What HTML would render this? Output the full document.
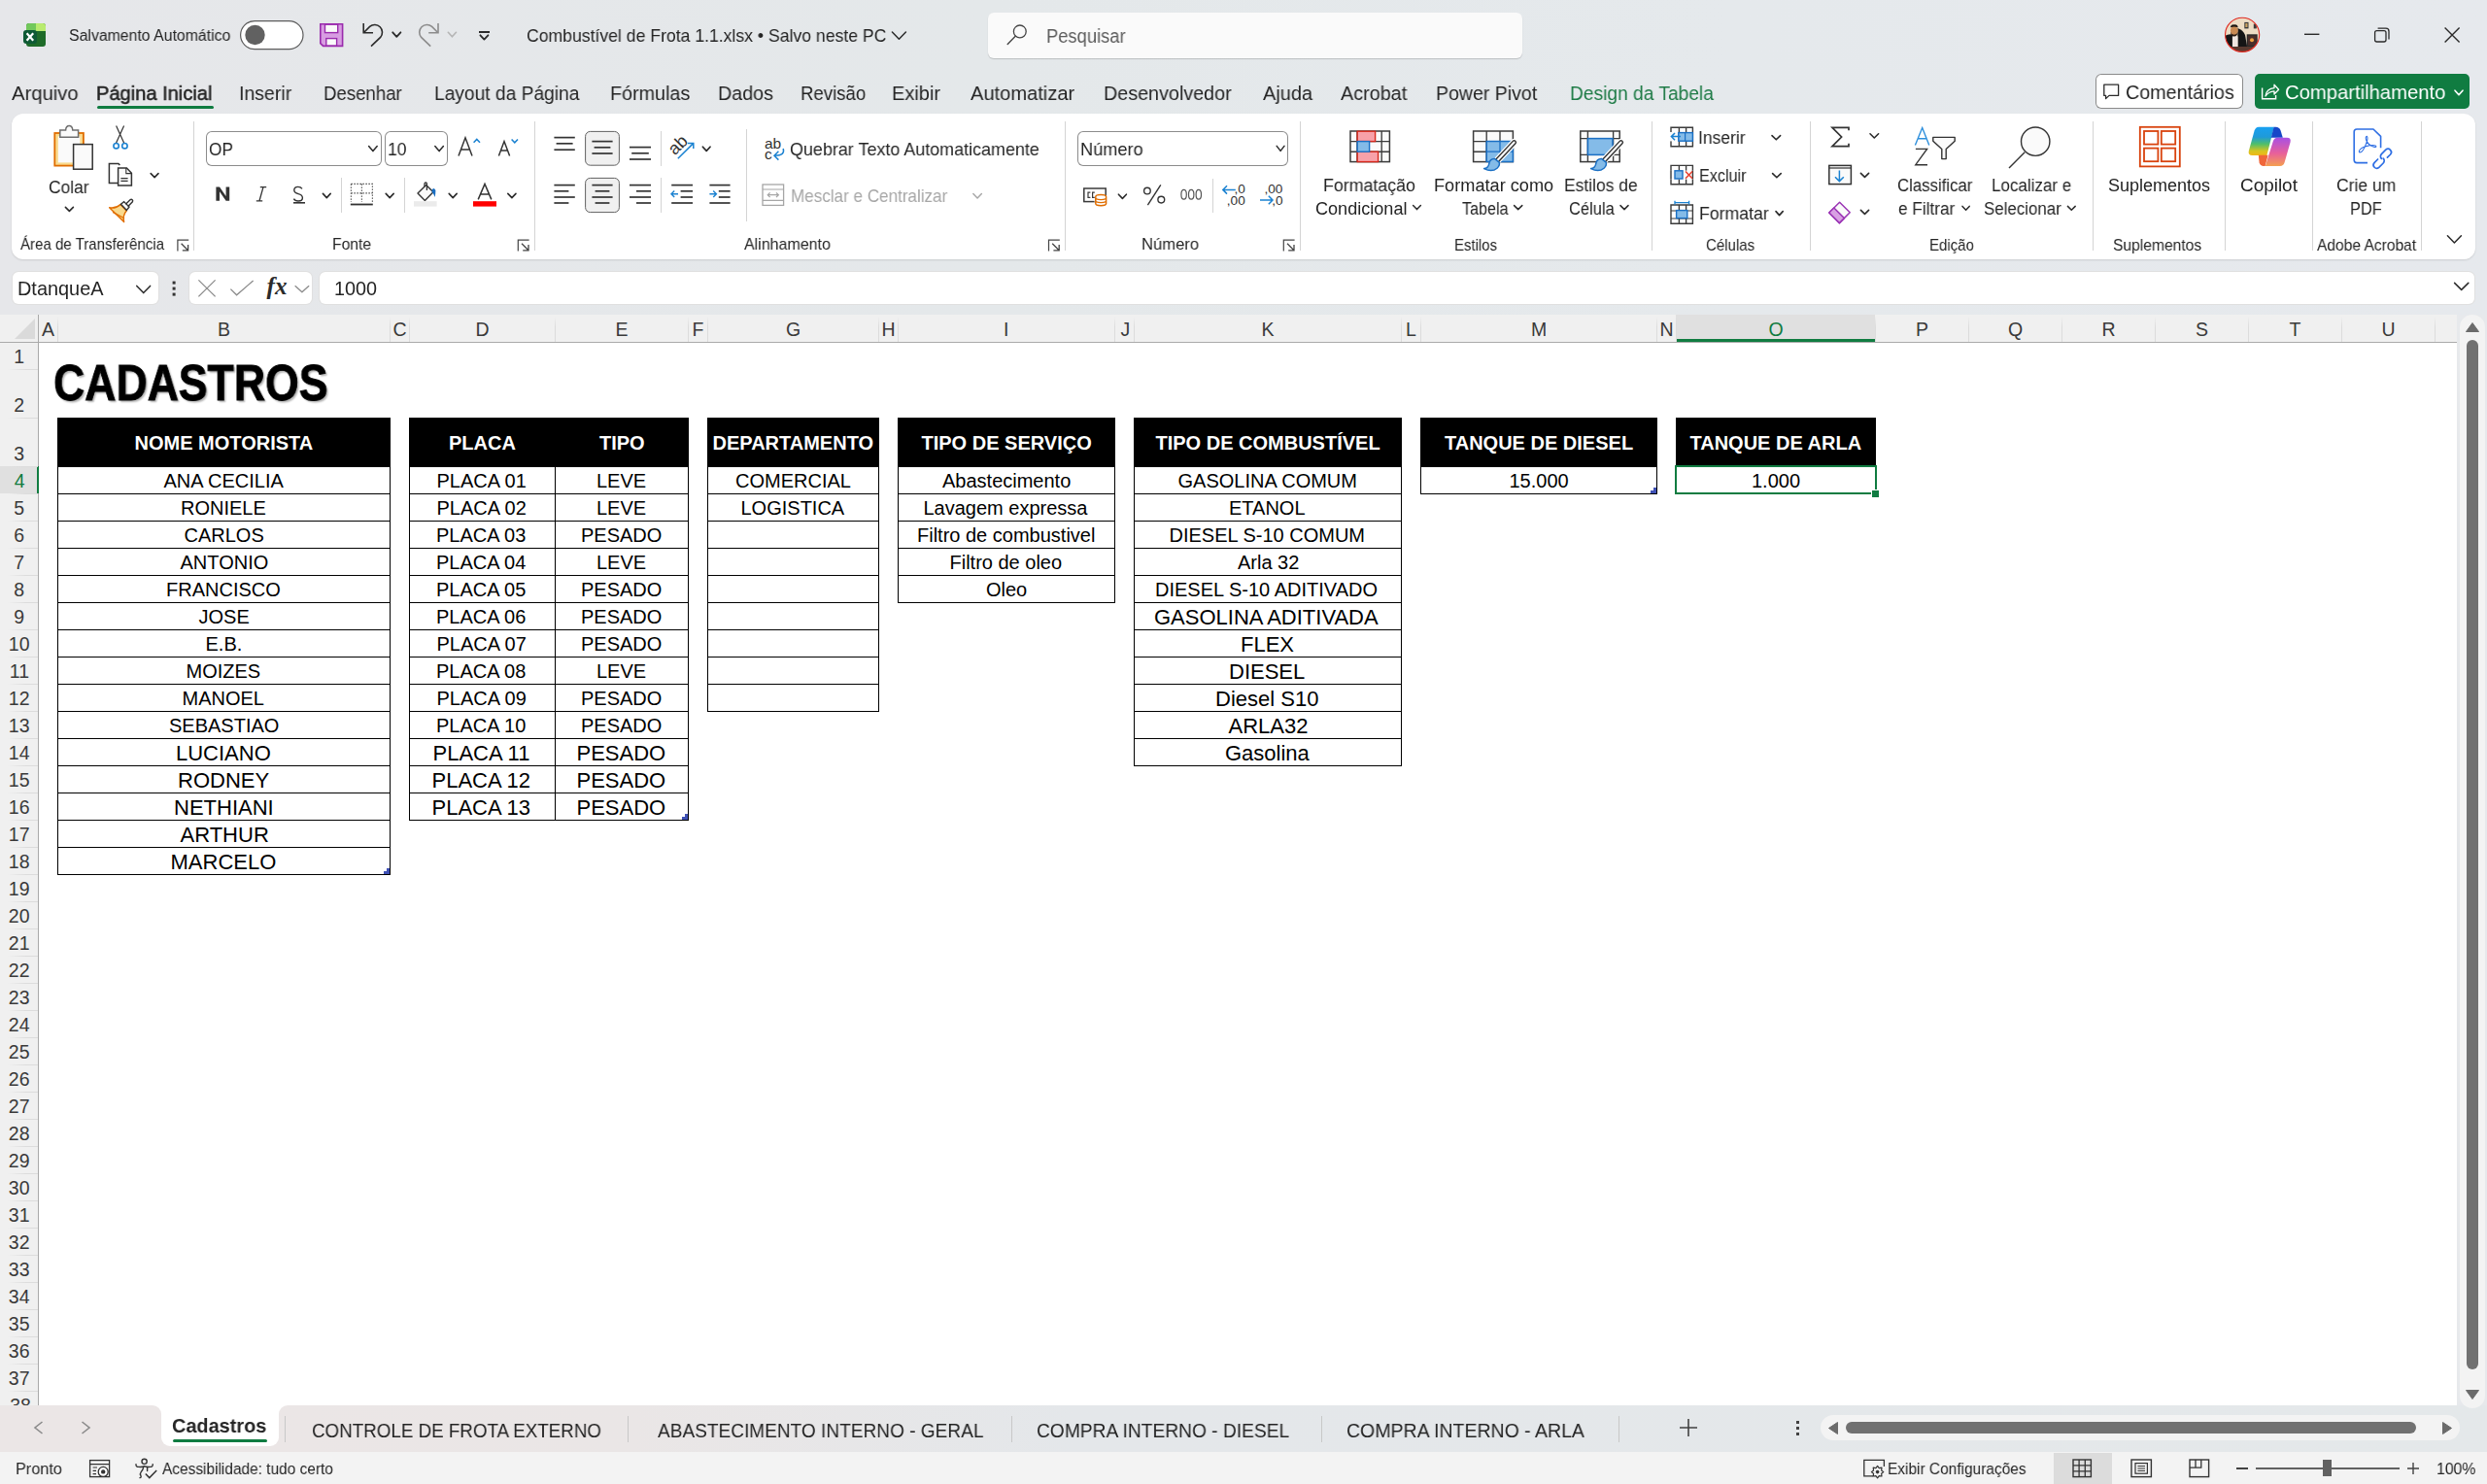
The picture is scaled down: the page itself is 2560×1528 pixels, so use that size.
<!DOCTYPE html>
<html><head><meta charset="utf-8"><style>
html,body{margin:0;padding:0;width:2560px;height:1528px;overflow:hidden;}
body{position:relative;background:#e7e9ec;font-family:'Liberation Sans', sans-serif;}
.t{position:absolute;white-space:nowrap;line-height:0;height:0;}
.g{will-change:transform;}
svg{overflow:visible}
</style></head><body>
<div style="position:absolute;left:0;top:0;width:2560px;height:324px;background:linear-gradient(90deg,#e6e7ea 0%,#e4e8ea 40%,#e5e9ec 70%,#e6e9ed 100%)"></div><div style="position:absolute;left:12px;top:117px;width:2536px;height:150px;background:#fff;border-radius:12px;box-shadow:0 1px 2px rgba(0,0,0,0.12);"></div><div style="position:absolute;left:13px;top:280px;width:150px;height:33px;background:#fff;border-radius:6px;box-shadow:0 0 0 1px #e0e0e0;"></div><div style="position:absolute;left:195px;top:280px;width:126px;height:33px;background:#fff;border-radius:6px;box-shadow:0 0 0 1px #e0e0e0;"></div><div style="position:absolute;left:329px;top:280px;width:2218px;height:33px;background:#fff;border-radius:6px;box-shadow:0 0 0 1px #e0e0e0;"></div><div style="position:absolute;left:0px;top:324px;width:2529px;height:28px;background:#f0f0f0;"></div><div style="position:absolute;left:0px;top:352px;width:39px;height:1095px;background:#f0f0f0;"></div><div style="position:absolute;left:39px;top:352px;width:2490px;height:1095px;background:#fff;"></div><div style="position:absolute;left:0px;top:352px;width:2529px;height:1px;background:#ababab;"></div><div style="position:absolute;left:39px;top:324px;width:1px;height:1123px;background:#a9a9a9;"></div><svg style="position:absolute;left:15px;top:328px;" width="22" height="21" viewBox="0 0 22 21"><path d="M21 0 L21 21 L0 21 Z" fill="#dadada"/></svg><div style="position:absolute;left:1725px;top:324px;width:205px;height:28px;background:#e0e0e0;"></div><div style="position:absolute;left:1725px;top:349px;width:206px;height:3px;background:#107c41;"></div><div style="position:absolute;left:59px;top:326px;width:1px;height:26px;background:linear-gradient(180deg,rgba(222,222,222,0),#dcdcdc 40%);"></div><div style="position:absolute;left:401px;top:326px;width:1px;height:26px;background:linear-gradient(180deg,rgba(222,222,222,0),#dcdcdc 40%);"></div><div style="position:absolute;left:421px;top:326px;width:1px;height:26px;background:linear-gradient(180deg,rgba(222,222,222,0),#dcdcdc 40%);"></div><div style="position:absolute;left:571px;top:326px;width:1px;height:26px;background:linear-gradient(180deg,rgba(222,222,222,0),#dcdcdc 40%);"></div><div style="position:absolute;left:708px;top:326px;width:1px;height:26px;background:linear-gradient(180deg,rgba(222,222,222,0),#dcdcdc 40%);"></div><div style="position:absolute;left:728px;top:326px;width:1px;height:26px;background:linear-gradient(180deg,rgba(222,222,222,0),#dcdcdc 40%);"></div><div style="position:absolute;left:904px;top:326px;width:1px;height:26px;background:linear-gradient(180deg,rgba(222,222,222,0),#dcdcdc 40%);"></div><div style="position:absolute;left:924px;top:326px;width:1px;height:26px;background:linear-gradient(180deg,rgba(222,222,222,0),#dcdcdc 40%);"></div><div style="position:absolute;left:1147px;top:326px;width:1px;height:26px;background:linear-gradient(180deg,rgba(222,222,222,0),#dcdcdc 40%);"></div><div style="position:absolute;left:1167px;top:326px;width:1px;height:26px;background:linear-gradient(180deg,rgba(222,222,222,0),#dcdcdc 40%);"></div><div style="position:absolute;left:1442px;top:326px;width:1px;height:26px;background:linear-gradient(180deg,rgba(222,222,222,0),#dcdcdc 40%);"></div><div style="position:absolute;left:1462px;top:326px;width:1px;height:26px;background:linear-gradient(180deg,rgba(222,222,222,0),#dcdcdc 40%);"></div><div style="position:absolute;left:1705px;top:326px;width:1px;height:26px;background:linear-gradient(180deg,rgba(222,222,222,0),#dcdcdc 40%);"></div><div style="position:absolute;left:1725px;top:326px;width:1px;height:26px;background:linear-gradient(180deg,rgba(222,222,222,0),#dcdcdc 40%);"></div><div style="position:absolute;left:1930px;top:326px;width:1px;height:26px;background:linear-gradient(180deg,rgba(222,222,222,0),#dcdcdc 40%);"></div><div style="position:absolute;left:2026px;top:326px;width:1px;height:26px;background:linear-gradient(180deg,rgba(222,222,222,0),#dcdcdc 40%);"></div><div style="position:absolute;left:2122px;top:326px;width:1px;height:26px;background:linear-gradient(180deg,rgba(222,222,222,0),#dcdcdc 40%);"></div><div style="position:absolute;left:2218px;top:326px;width:1px;height:26px;background:linear-gradient(180deg,rgba(222,222,222,0),#dcdcdc 40%);"></div><div style="position:absolute;left:2314px;top:326px;width:1px;height:26px;background:linear-gradient(180deg,rgba(222,222,222,0),#dcdcdc 40%);"></div><div style="position:absolute;left:2410px;top:326px;width:1px;height:26px;background:linear-gradient(180deg,rgba(222,222,222,0),#dcdcdc 40%);"></div><div style="position:absolute;left:2506px;top:326px;width:1px;height:26px;background:linear-gradient(180deg,rgba(222,222,222,0),#dcdcdc 40%);"></div><div style="position:absolute;left:0px;top:480px;width:39px;height:28px;background:#e0e0e0;"></div><div style="position:absolute;left:37.5px;top:480px;width:2.5px;height:28px;background:#107c41;"></div><div style="position:absolute;left:8px;top:380px;width:31px;height:1px;background:linear-gradient(90deg,rgba(220,220,220,0),#dcdcdc 60%);"></div><div style="position:absolute;left:8px;top:430px;width:31px;height:1px;background:linear-gradient(90deg,rgba(220,220,220,0),#dcdcdc 60%);"></div><div style="position:absolute;left:8px;top:480px;width:31px;height:1px;background:linear-gradient(90deg,rgba(220,220,220,0),#dcdcdc 60%);"></div><div style="position:absolute;left:8px;top:508px;width:31px;height:1px;background:linear-gradient(90deg,rgba(220,220,220,0),#dcdcdc 60%);"></div><div style="position:absolute;left:8px;top:536px;width:31px;height:1px;background:linear-gradient(90deg,rgba(220,220,220,0),#dcdcdc 60%);"></div><div style="position:absolute;left:8px;top:564px;width:31px;height:1px;background:linear-gradient(90deg,rgba(220,220,220,0),#dcdcdc 60%);"></div><div style="position:absolute;left:8px;top:592px;width:31px;height:1px;background:linear-gradient(90deg,rgba(220,220,220,0),#dcdcdc 60%);"></div><div style="position:absolute;left:8px;top:620px;width:31px;height:1px;background:linear-gradient(90deg,rgba(220,220,220,0),#dcdcdc 60%);"></div><div style="position:absolute;left:8px;top:648px;width:31px;height:1px;background:linear-gradient(90deg,rgba(220,220,220,0),#dcdcdc 60%);"></div><div style="position:absolute;left:8px;top:676px;width:31px;height:1px;background:linear-gradient(90deg,rgba(220,220,220,0),#dcdcdc 60%);"></div><div style="position:absolute;left:8px;top:704px;width:31px;height:1px;background:linear-gradient(90deg,rgba(220,220,220,0),#dcdcdc 60%);"></div><div style="position:absolute;left:8px;top:732px;width:31px;height:1px;background:linear-gradient(90deg,rgba(220,220,220,0),#dcdcdc 60%);"></div><div style="position:absolute;left:8px;top:760px;width:31px;height:1px;background:linear-gradient(90deg,rgba(220,220,220,0),#dcdcdc 60%);"></div><div style="position:absolute;left:8px;top:788px;width:31px;height:1px;background:linear-gradient(90deg,rgba(220,220,220,0),#dcdcdc 60%);"></div><div style="position:absolute;left:8px;top:816px;width:31px;height:1px;background:linear-gradient(90deg,rgba(220,220,220,0),#dcdcdc 60%);"></div><div style="position:absolute;left:8px;top:844px;width:31px;height:1px;background:linear-gradient(90deg,rgba(220,220,220,0),#dcdcdc 60%);"></div><div style="position:absolute;left:8px;top:872px;width:31px;height:1px;background:linear-gradient(90deg,rgba(220,220,220,0),#dcdcdc 60%);"></div><div style="position:absolute;left:8px;top:900px;width:31px;height:1px;background:linear-gradient(90deg,rgba(220,220,220,0),#dcdcdc 60%);"></div><div style="position:absolute;left:8px;top:928px;width:31px;height:1px;background:linear-gradient(90deg,rgba(220,220,220,0),#dcdcdc 60%);"></div><div style="position:absolute;left:8px;top:956px;width:31px;height:1px;background:linear-gradient(90deg,rgba(220,220,220,0),#dcdcdc 60%);"></div><div style="position:absolute;left:8px;top:984px;width:31px;height:1px;background:linear-gradient(90deg,rgba(220,220,220,0),#dcdcdc 60%);"></div><div style="position:absolute;left:8px;top:1012px;width:31px;height:1px;background:linear-gradient(90deg,rgba(220,220,220,0),#dcdcdc 60%);"></div><div style="position:absolute;left:8px;top:1040px;width:31px;height:1px;background:linear-gradient(90deg,rgba(220,220,220,0),#dcdcdc 60%);"></div><div style="position:absolute;left:8px;top:1068px;width:31px;height:1px;background:linear-gradient(90deg,rgba(220,220,220,0),#dcdcdc 60%);"></div><div style="position:absolute;left:8px;top:1096px;width:31px;height:1px;background:linear-gradient(90deg,rgba(220,220,220,0),#dcdcdc 60%);"></div><div style="position:absolute;left:8px;top:1124px;width:31px;height:1px;background:linear-gradient(90deg,rgba(220,220,220,0),#dcdcdc 60%);"></div><div style="position:absolute;left:8px;top:1152px;width:31px;height:1px;background:linear-gradient(90deg,rgba(220,220,220,0),#dcdcdc 60%);"></div><div style="position:absolute;left:8px;top:1180px;width:31px;height:1px;background:linear-gradient(90deg,rgba(220,220,220,0),#dcdcdc 60%);"></div><div style="position:absolute;left:8px;top:1208px;width:31px;height:1px;background:linear-gradient(90deg,rgba(220,220,220,0),#dcdcdc 60%);"></div><div style="position:absolute;left:8px;top:1236px;width:31px;height:1px;background:linear-gradient(90deg,rgba(220,220,220,0),#dcdcdc 60%);"></div><div style="position:absolute;left:8px;top:1264px;width:31px;height:1px;background:linear-gradient(90deg,rgba(220,220,220,0),#dcdcdc 60%);"></div><div style="position:absolute;left:8px;top:1292px;width:31px;height:1px;background:linear-gradient(90deg,rgba(220,220,220,0),#dcdcdc 60%);"></div><div style="position:absolute;left:8px;top:1320px;width:31px;height:1px;background:linear-gradient(90deg,rgba(220,220,220,0),#dcdcdc 60%);"></div><div style="position:absolute;left:8px;top:1348px;width:31px;height:1px;background:linear-gradient(90deg,rgba(220,220,220,0),#dcdcdc 60%);"></div><div style="position:absolute;left:8px;top:1376px;width:31px;height:1px;background:linear-gradient(90deg,rgba(220,220,220,0),#dcdcdc 60%);"></div><div style="position:absolute;left:8px;top:1404px;width:31px;height:1px;background:linear-gradient(90deg,rgba(220,220,220,0),#dcdcdc 60%);"></div><div style="position:absolute;left:8px;top:1432px;width:31px;height:1px;background:linear-gradient(90deg,rgba(220,220,220,0),#dcdcdc 60%);"></div><div style="position:absolute;left:0;top:1432px;width:39px;height:15px;overflow:hidden"><div class="t" style="left:10.2px;top:14.70px;font-size:19.5px;color:#3a3a3a">38</div></div><div style="position:absolute;left:59px;top:430px;width:343px;height:51px;background:#000;"></div><div style="position:absolute;left:59px;top:480px;width:343px;height:1px;background:#000;"></div><div style="position:absolute;left:59px;top:508px;width:343px;height:1px;background:#000;"></div><div style="position:absolute;left:59px;top:536px;width:343px;height:1px;background:#000;"></div><div style="position:absolute;left:59px;top:564px;width:343px;height:1px;background:#000;"></div><div style="position:absolute;left:59px;top:592px;width:343px;height:1px;background:#000;"></div><div style="position:absolute;left:59px;top:620px;width:343px;height:1px;background:#000;"></div><div style="position:absolute;left:59px;top:648px;width:343px;height:1px;background:#000;"></div><div style="position:absolute;left:59px;top:676px;width:343px;height:1px;background:#000;"></div><div style="position:absolute;left:59px;top:704px;width:343px;height:1px;background:#000;"></div><div style="position:absolute;left:59px;top:732px;width:343px;height:1px;background:#000;"></div><div style="position:absolute;left:59px;top:760px;width:343px;height:1px;background:#000;"></div><div style="position:absolute;left:59px;top:788px;width:343px;height:1px;background:#000;"></div><div style="position:absolute;left:59px;top:816px;width:343px;height:1px;background:#000;"></div><div style="position:absolute;left:59px;top:844px;width:343px;height:1px;background:#000;"></div><div style="position:absolute;left:59px;top:872px;width:343px;height:1px;background:#000;"></div><div style="position:absolute;left:59px;top:900px;width:343px;height:1px;background:#000;"></div><div style="position:absolute;left:59px;top:480px;width:1px;height:421px;background:#000;"></div><div style="position:absolute;left:401px;top:480px;width:1px;height:421px;background:#000;"></div><div style="position:absolute;left:421px;top:430px;width:288px;height:51px;background:#000;"></div><div style="position:absolute;left:421px;top:480px;width:288px;height:1px;background:#000;"></div><div style="position:absolute;left:421px;top:508px;width:288px;height:1px;background:#000;"></div><div style="position:absolute;left:421px;top:536px;width:288px;height:1px;background:#000;"></div><div style="position:absolute;left:421px;top:564px;width:288px;height:1px;background:#000;"></div><div style="position:absolute;left:421px;top:592px;width:288px;height:1px;background:#000;"></div><div style="position:absolute;left:421px;top:620px;width:288px;height:1px;background:#000;"></div><div style="position:absolute;left:421px;top:648px;width:288px;height:1px;background:#000;"></div><div style="position:absolute;left:421px;top:676px;width:288px;height:1px;background:#000;"></div><div style="position:absolute;left:421px;top:704px;width:288px;height:1px;background:#000;"></div><div style="position:absolute;left:421px;top:732px;width:288px;height:1px;background:#000;"></div><div style="position:absolute;left:421px;top:760px;width:288px;height:1px;background:#000;"></div><div style="position:absolute;left:421px;top:788px;width:288px;height:1px;background:#000;"></div><div style="position:absolute;left:421px;top:816px;width:288px;height:1px;background:#000;"></div><div style="position:absolute;left:421px;top:844px;width:288px;height:1px;background:#000;"></div><div style="position:absolute;left:421px;top:480px;width:1px;height:365px;background:#000;"></div><div style="position:absolute;left:571px;top:480px;width:1px;height:365px;background:#000;"></div><div style="position:absolute;left:708px;top:480px;width:1px;height:365px;background:#000;"></div><div style="position:absolute;left:728px;top:430px;width:177px;height:51px;background:#000;"></div><div style="position:absolute;left:728px;top:480px;width:177px;height:1px;background:#000;"></div><div style="position:absolute;left:728px;top:508px;width:177px;height:1px;background:#000;"></div><div style="position:absolute;left:728px;top:536px;width:177px;height:1px;background:#000;"></div><div style="position:absolute;left:728px;top:564px;width:177px;height:1px;background:#000;"></div><div style="position:absolute;left:728px;top:592px;width:177px;height:1px;background:#000;"></div><div style="position:absolute;left:728px;top:620px;width:177px;height:1px;background:#000;"></div><div style="position:absolute;left:728px;top:648px;width:177px;height:1px;background:#000;"></div><div style="position:absolute;left:728px;top:676px;width:177px;height:1px;background:#000;"></div><div style="position:absolute;left:728px;top:704px;width:177px;height:1px;background:#000;"></div><div style="position:absolute;left:728px;top:732px;width:177px;height:1px;background:#000;"></div><div style="position:absolute;left:728px;top:480px;width:1px;height:253px;background:#000;"></div><div style="position:absolute;left:904px;top:480px;width:1px;height:253px;background:#000;"></div><div style="position:absolute;left:924px;top:430px;width:224px;height:51px;background:#000;"></div><div style="position:absolute;left:924px;top:480px;width:224px;height:1px;background:#000;"></div><div style="position:absolute;left:924px;top:508px;width:224px;height:1px;background:#000;"></div><div style="position:absolute;left:924px;top:536px;width:224px;height:1px;background:#000;"></div><div style="position:absolute;left:924px;top:564px;width:224px;height:1px;background:#000;"></div><div style="position:absolute;left:924px;top:592px;width:224px;height:1px;background:#000;"></div><div style="position:absolute;left:924px;top:620px;width:224px;height:1px;background:#000;"></div><div style="position:absolute;left:924px;top:480px;width:1px;height:141px;background:#000;"></div><div style="position:absolute;left:1147px;top:480px;width:1px;height:141px;background:#000;"></div><div style="position:absolute;left:1167px;top:430px;width:276px;height:51px;background:#000;"></div><div style="position:absolute;left:1167px;top:480px;width:276px;height:1px;background:#000;"></div><div style="position:absolute;left:1167px;top:508px;width:276px;height:1px;background:#000;"></div><div style="position:absolute;left:1167px;top:536px;width:276px;height:1px;background:#000;"></div><div style="position:absolute;left:1167px;top:564px;width:276px;height:1px;background:#000;"></div><div style="position:absolute;left:1167px;top:592px;width:276px;height:1px;background:#000;"></div><div style="position:absolute;left:1167px;top:620px;width:276px;height:1px;background:#000;"></div><div style="position:absolute;left:1167px;top:648px;width:276px;height:1px;background:#000;"></div><div style="position:absolute;left:1167px;top:676px;width:276px;height:1px;background:#000;"></div><div style="position:absolute;left:1167px;top:704px;width:276px;height:1px;background:#000;"></div><div style="position:absolute;left:1167px;top:732px;width:276px;height:1px;background:#000;"></div><div style="position:absolute;left:1167px;top:760px;width:276px;height:1px;background:#000;"></div><div style="position:absolute;left:1167px;top:788px;width:276px;height:1px;background:#000;"></div><div style="position:absolute;left:1167px;top:480px;width:1px;height:309px;background:#000;"></div><div style="position:absolute;left:1442px;top:480px;width:1px;height:309px;background:#000;"></div><div style="position:absolute;left:1462px;top:430px;width:244px;height:51px;background:#000;"></div><div style="position:absolute;left:1462px;top:480px;width:244px;height:1px;background:#000;"></div><div style="position:absolute;left:1462px;top:508px;width:244px;height:1px;background:#000;"></div><div style="position:absolute;left:1462px;top:480px;width:1px;height:29px;background:#000;"></div><div style="position:absolute;left:1705px;top:480px;width:1px;height:29px;background:#000;"></div><div style="position:absolute;left:1725px;top:430px;width:206px;height:51px;background:#000;"></div><div style="position:absolute;left:1725px;top:480px;width:206px;height:1px;background:#000;"></div><div style="position:absolute;left:1725px;top:508px;width:206px;height:1px;background:#000;"></div><div style="position:absolute;left:1725px;top:480px;width:1px;height:29px;background:#000;"></div><div style="position:absolute;left:1930px;top:480px;width:1px;height:29px;background:#000;"></div><div style="position:absolute;left:395px;top:897px;width:6px;height:3px;background:#3f51b5;"></div><div style="position:absolute;left:398px;top:894px;width:3px;height:3px;background:#3f51b5;"></div><div style="position:absolute;left:702px;top:841px;width:6px;height:3px;background:#3f51b5;"></div><div style="position:absolute;left:705px;top:838px;width:3px;height:3px;background:#3f51b5;"></div><div style="position:absolute;left:1699px;top:505px;width:6px;height:3px;background:#3f51b5;"></div><div style="position:absolute;left:1702px;top:502px;width:3px;height:3px;background:#3f51b5;"></div><div style="position:absolute;left:1724px;top:479px;width:208px;height:2px;background:#107c41;"></div><div style="position:absolute;left:1724px;top:507px;width:208px;height:2px;background:#107c41;"></div><div style="position:absolute;left:1724px;top:479px;width:2px;height:30px;background:#107c41;"></div><div style="position:absolute;left:1930px;top:479px;width:2px;height:26px;background:#107c41;"></div><div style="position:absolute;left:1926px;top:504px;width:7px;height:7px;background:#107c41;border:1px solid #fff;"></div><div style="position:absolute;left:0px;top:1447px;width:2560px;height:14px;background:#fff;"></div><div style="position:absolute;left:0;top:1447px;width:166px;height:48px;background:#ebe6e6;border-top-right-radius:9px"></div><div style="position:absolute;left:287px;top:1447px;width:2273px;height:48px;background:linear-gradient(90deg,#ebe6e6 0%,#eae6e6 16%,#e4e7ea 36%,#e4e8ea 100%);border-top-left-radius:9px"></div><div style="position:absolute;left:166px;top:1470px;width:121px;height:25px;background:#ebe6e6;"></div><div style="position:absolute;left:0px;top:1495px;width:2560px;height:33px;background:#f3f3f3;"></div><div style="position:absolute;left:166px;top:1440px;width:121px;height:49px;background:#fff;border-radius:0 0 9px 9px;"></div><div style="position:absolute;left:178px;top:1482px;width:97px;height:3px;background:#107c41;border-radius:2px;"></div><div style="position:absolute;left:293px;top:1458px;width:1px;height:27px;background:#c8c8c8;"></div><div style="position:absolute;left:646px;top:1458px;width:1px;height:27px;background:#c8c8c8;"></div><div style="position:absolute;left:1041px;top:1458px;width:1px;height:27px;background:#c8c8c8;"></div><div style="position:absolute;left:1360px;top:1458px;width:1px;height:27px;background:#c8c8c8;"></div><div style="position:absolute;left:1666px;top:1458px;width:1px;height:27px;background:#c8c8c8;"></div><svg style="position:absolute;left:34px;top:1463px;" width="11" height="14" viewBox="0 0 11 14"><path d="M9.5 1 L2 7 L9.5 13" fill="none" stroke="#8a8a8a" stroke-width="1.6"/></svg><svg style="position:absolute;left:83px;top:1463px;" width="11" height="14" viewBox="0 0 11 14"><path d="M1.5 1 L9 7 L1.5 13" fill="none" stroke="#8a8a8a" stroke-width="1.6"/></svg><svg style="position:absolute;left:1729px;top:1461px;" width="18" height="18" viewBox="0 0 18 18"><path d="M9 0 V18 M0 9 H18" stroke="#424242" stroke-width="1.6"/></svg><div style="position:absolute;left:1849px;top:1463px;width:3px;height:3px;background:#424242;"></div><div style="position:absolute;left:1849px;top:1469px;width:3px;height:3px;background:#424242;"></div><div style="position:absolute;left:1849px;top:1475px;width:3px;height:3px;background:#424242;"></div><div style="position:absolute;left:1874px;top:1457px;width:658px;height:26px;background:#f3f3f3;border-radius:13px;"></div><svg style="position:absolute;left:1882px;top:1464px;" width="10" height="13" viewBox="0 0 10 13"><path d="M9.5 0.5 L0.5 6.5 L9.5 12.5 Z" fill="#6b6b6b" stroke="#6b6b6b" stroke-linejoin="round"/></svg><div style="position:absolute;left:1900px;top:1464px;width:587px;height:12px;background:#717171;border-radius:6px;"></div><svg style="position:absolute;left:2514px;top:1464px;" width="10" height="13" viewBox="0 0 10 13"><path d="M0.5 0.5 L9.5 6.5 L0.5 12.5 Z" fill="#6b6b6b" stroke="#6b6b6b" stroke-linejoin="round"/></svg><div style="position:absolute;left:2532px;top:324px;width:26px;height:1126px;background:#f3f3f3;border-radius:13px;"></div><svg style="position:absolute;left:2538px;top:332px;" width="14" height="10" viewBox="0 0 14 10"><path d="M7 0.5 L13.5 9.5 L0.5 9.5 Z" fill="#6b6b6b" stroke="#6b6b6b" stroke-linejoin="round"/></svg><div style="position:absolute;left:2539px;top:350px;width:12px;height:1060px;background:#717171;border-radius:6px;"></div><svg style="position:absolute;left:2538px;top:1431px;" width="14" height="10" viewBox="0 0 14 10"><path d="M7 9.5 L13.5 0.5 L0.5 0.5 Z" fill="#6b6b6b" stroke="#6b6b6b" stroke-linejoin="round"/></svg><div style="position:absolute;left:2114px;top:1496px;width:60px;height:32px;background:#dcdcdc;"></div><div style="position:absolute;left:2322px;top:1511px;width:148px;height:2px;background:#616161;"></div><div style="position:absolute;left:2391px;top:1503px;width:9px;height:17px;background:#616161;"></div><div style="position:absolute;left:2302px;top:1511px;width:12px;height:1.5px;background:#424242;"></div><svg style="position:absolute;left:2478px;top:1506px;" width="12" height="12" viewBox="0 0 12 12"><path d="M6 0 V12 M0 6 H12" stroke="#424242" stroke-width="1.4"/></svg><div style="position:absolute;left:1017px;top:13px;width:550px;height:47px;background:#fafafa;border-radius:6px;box-shadow:0 1px 1px rgba(0,0,0,0.18);"></div><div style="position:absolute;left:100px;top:109px;width:120px;height:3px;background:#107c41;border-radius:2px;"></div><div style="position:absolute;left:2157px;top:76px;width:152px;height:36px;background:#fff;border-radius:6px;box-shadow:inset 0 0 0 1px #8a8a8a;"></div><div style="position:absolute;left:2321px;top:76px;width:221px;height:36px;background:#107c41;border-radius:5px;"></div><div style="position:absolute;left:212px;top:135px;width:181px;height:36px;background:#fff;border-radius:6px;box-shadow:inset 0 0 0 1px #8c8c8c;"></div><div style="position:absolute;left:396px;top:135px;width:65px;height:36px;background:#fff;border-radius:6px;box-shadow:inset 0 0 0 1px #8c8c8c;"></div><div style="position:absolute;left:1109px;top:135px;width:217px;height:36px;background:#fff;border-radius:6px;box-shadow:inset 0 0 0 1px #8c8c8c;"></div><div style="position:absolute;left:199px;top:125px;width:1px;height:133px;background:#d4d4d4;"></div><div style="position:absolute;left:550px;top:125px;width:1px;height:133px;background:#d4d4d4;"></div><div style="position:absolute;left:1096px;top:125px;width:1px;height:133px;background:#d4d4d4;"></div><div style="position:absolute;left:1338px;top:125px;width:1px;height:133px;background:#d4d4d4;"></div><div style="position:absolute;left:1700px;top:125px;width:1px;height:133px;background:#d4d4d4;"></div><div style="position:absolute;left:1863px;top:125px;width:1px;height:133px;background:#d4d4d4;"></div><div style="position:absolute;left:2154px;top:125px;width:1px;height:133px;background:#d4d4d4;"></div><div style="position:absolute;left:2290px;top:125px;width:1px;height:133px;background:#d4d4d4;"></div><div style="position:absolute;left:2380px;top:125px;width:1px;height:133px;background:#d4d4d4;"></div><div style="position:absolute;left:2492px;top:125px;width:1px;height:133px;background:#d4d4d4;"></div><div style="position:absolute;left:351px;top:183px;width:1px;height:36px;background:#d4d4d4;"></div><div style="position:absolute;left:416px;top:183px;width:1px;height:36px;background:#d4d4d4;"></div><div style="position:absolute;left:680px;top:135px;width:1px;height:36px;background:#d4d4d4;"></div><div style="position:absolute;left:680px;top:183px;width:1px;height:36px;background:#d4d4d4;"></div><div style="position:absolute;left:768px;top:133px;width:1px;height:95px;background:#d4d4d4;"></div><div style="position:absolute;left:1248px;top:184px;width:1px;height:35px;background:#d4d4d4;"></div>
<svg style="position:absolute;left:0;top:0" width="2560" height="1528" viewBox="0 0 2560 1528"><rect x="27" y="24" width="20" height="24" rx="3" fill="#1e6b29"/><path d="M30 24 H37 V32 H27 V27 A3 3 0 0 1 30 24 Z" fill="#72c85b"/><path d="M37 24 H44 A3 3 0 0 1 47 27 V32 H37 Z" fill="#b9eb6f"/><rect x="24" y="31" width="14" height="14" rx="3" fill="#0e5a35"/><path d="M27.6 34.2 L34.2 41.8 M34.2 34.2 L27.6 41.8" stroke="#fff" stroke-width="2.2"/><rect x="247.6" y="21.6" width="64.4" height="29" rx="14.5" fill="#fff" stroke="#5c5c5c" stroke-width="1.2"/><circle cx="262.5" cy="36" r="10.2" fill="#616161"/><path d="M329.8 24.8 H352.6 V47.4 H332.6 L329.8 44.6 Z" fill="#d89de2" stroke="#9a2bad" stroke-width="1.6"/><rect x="334.5" y="25.2" width="13.2" height="8.4" fill="#fafafa" stroke="#9a2bad" stroke-width="1.4"/><rect x="335.8" y="39.6" width="10.8" height="7.4" fill="#fafafa" stroke="#9a2bad" stroke-width="1.4"/><path d="M374.2 24 V33.8 H384" fill="none" stroke="#2b2b2b" stroke-width="1.6" /><path d="M374.8 33.2 L380.6 27.4 A7.8 7.8 0 0 1 391.6 38.4 L382 47.6" fill="none" stroke="#2b2b2b" stroke-width="1.6" /><path d="M404.2 33.3 L408.29999999999995 37.8 L412.4 33.3" fill="none" stroke="#2b2b2b" stroke-width="1.8" stroke-linecap='round' stroke-linejoin='round'/><path d="M451 24 V33.8 H441.2" fill="none" stroke="#8c8c8c" stroke-width="1.6" /><path d="M450.4 33.2 L444.6 27.4 A7.8 7.8 0 0 0 433.6 38.4 L443.2 47.6" fill="none" stroke="#8c8c8c" stroke-width="1.6" /><path d="M461.3 33.3 L465.4 37.8 L469.5 33.3" fill="none" stroke="#b5b5b5" stroke-width="1.6" stroke-linecap='round' stroke-linejoin='round'/><rect x="493" y="32" width="11" height="2" fill="#2b2b2b"/><path d="M494.4 36.3 L498.4 40.6 L502.4 36.3" fill="none" stroke="#2b2b2b" stroke-width="1.8" stroke-linecap='round' stroke-linejoin='round'/><path d="M918.4 33 L925.4 40.2 L932.4 33" fill="none" stroke="#2b2b2b" stroke-width="1.5" stroke-linecap='round' stroke-linejoin='round'/><circle cx="1049.8" cy="32.4" r="6.4" fill="none" stroke="#454545" stroke-width="1.3" /><path d="M1045.2 37.2 L1037.2 45.6" fill="none" stroke="#454545" stroke-width="1.4" stroke-linecap='round'/><defs><clipPath id="avc"><circle cx="2308.1" cy="35.8" r="17.4"/></clipPath></defs><g clip-path="url(#avc)"><rect x="2288" y="16" width="42" height="42" fill="#eddcc4"/><rect x="2310.3" y="22.9" width="4.2" height="6.5" fill="#3a3a3a"/><rect x="2311.3" y="24" width="2.2" height="4" fill="#c8a060"/><rect x="2319.8" y="24.6" width="3" height="4.8" fill="#3a3a3a"/><path d="M2290 37 Q2294 34.6 2298.4 35.6 L2298.4 50 L2290 50 Z" fill="#151515"/><path d="M2303.4 29 Q2309 31 2311 36 L2313.5 50 L2303.4 50 Z" fill="#151515"/><rect x="2297.9" y="37.4" width="5.6" height="13" fill="#efe6e0"/><ellipse cx="2299.8" cy="31.6" rx="3.9" ry="5.2" fill="#c98a52"/><path d="M2295.8 28.6 Q2296.4 25 2299.8 25.4 Q2303.4 25 2303.8 28.8 L2303 28 Q2299.8 26.8 2296.6 28 Z" fill="#1a1410"/><path d="M2296 32.8 Q2296.6 37.6 2299.8 37.6 Q2303 37.6 2303.6 32.8 Q2303 35.4 2299.8 35.8 Q2296.6 35.4 2296 32.8 Z" fill="#2a1c14"/><rect x="2312.7" y="35.3" width="11" height="12.7" fill="#2a2a2a"/><rect x="2313.8" y="36.6" width="8.8" height="10.2" fill="#4a2e2a"/><circle cx="2318" cy="41.3" r="2" fill="#f0a040"/><rect x="2288" y="48" width="42" height="10" fill="#5a3a30"/></g><circle cx="2308.1" cy="35.8" r="17.6" fill="none" stroke="#e02a20" stroke-width="1.1"/><rect x="2372" y="34.6" width="15.4" height="1.4" fill="#2b2b2b"/><rect x="2444.6" y="31.6" width="11.4" height="11.4" rx="2" fill="none" stroke="#2b2b2b" stroke-width="1.3" /><path d="M2447.6 29.2 H2456 A3 3 0 0 1 2459 32.2 V40.4" fill="none" stroke="#2b2b2b" stroke-width="1.3" /><path d="M2516.6 28.6 L2531.6 43.6 M2531.6 28.6 L2516.6 43.6" fill="none" stroke="#2b2b2b" stroke-width="1.4" /><path d="M2165.8 87.2 H2180.6 V98.4 H2171 L2167.6 101.6 V98.4 H2165.8 Z" fill="none" stroke="#2b2b2b" stroke-width="1.3" stroke-linejoin='round'/><path d="M2328.6 90.4 V101.8 H2342.6 V98" fill="none" stroke="#fff" stroke-width="1.4" /><path d="M2332 99 Q2333 91 2341 90.6 V87.2 L2345.6 92.2 L2341 97 V93.8 Q2335.4 94 2332 99 Z" fill="none" stroke="#fff" stroke-width="1.3" stroke-linejoin='round'/><path d="M2527 93.2 L2531.0 97.6 L2535 93.2" fill="none" stroke="#fff" stroke-width="1.6" stroke-linecap='round' stroke-linejoin='round'/><rect x="56.3" y="137" width="29.6" height="33.6" fill="#f9d98c" stroke="#e06d00" stroke-width="1.8"/><rect x="59.8" y="140.4" width="22.6" height="27" fill="#fafafa"/><path d="M61.8 141.2 V134 H67.6 Q68 129.6 71.2 129.6 Q74.4 129.6 74.8 134 H80.6 V141.2 Z" fill="#fafafa" stroke="#6e6e6e" stroke-width="1.5"/><rect x="75.6" y="148.6" width="19.6" height="25.6" fill="#fafafa" stroke="#333" stroke-width="1.5"/><path d="M67.4 213.4 L71.4 217.4 L75.4 213.4" fill="none" stroke="#2b2b2b" stroke-width="1.6" stroke-linecap='round' stroke-linejoin='round'/><path d="M119.6 129.4 L127.8 147.6 M127.6 129.4 L119.4 147.6" fill="none" stroke="#333" stroke-width="1.2" /><circle cx="119.6" cy="150.2" r="2.7" fill="none" stroke="#1b82d1" stroke-width="1.6" /><circle cx="128.4" cy="150.2" r="2.7" fill="none" stroke="#1b82d1" stroke-width="1.6" /><path d="M123 188.4 H112.4 V168.6 H122 L123.4 170" fill="none" stroke="#333" stroke-width="1.5" /><path d="M121.6 173 H130.4 L135.4 178.2 V191 H121.6 Z" fill="#fafafa" stroke="#333" stroke-width="1.5"/><path d="M129.8 173 V178.6 H135.4 M124.4 183.6 H131.6 M124.4 186.4 H131.6" fill="none" stroke="#333" stroke-width="1.1" /><path d="M155.2 178.6 L159.1 182.6 L163 178.6" fill="none" stroke="#2b2b2b" stroke-width="1.6" stroke-linecap='round' stroke-linejoin='round'/><path d="M112.6 213.8 Q119 215 124 210.6 L130.2 217 Q126 222 127.6 228.6 Z" fill="#f9d98c" stroke="#e06d00" stroke-width="1.4" stroke-linejoin="round"/><path d="M116 218.4 L128 224.8" fill="none" stroke="#e06d00" stroke-width="1.2" /><path d="M124.4 210.2 L127.6 207.6 L133 213 L130.4 216.4 Z" fill="#fafafa" stroke="#333" stroke-width="1.4"/><path d="M129.4 210.2 L134.2 205.6 A1.6 1.6 0 0 1 136.4 207.8 L131.8 212.6" fill="none" stroke="#333" stroke-width="1.4" /><path d="M182.89999999999998 258.4 V247.1 H194.2" fill="none" stroke="#444" stroke-width="1.2" /><path d="M186.6 250.8 L193.6 257.8 M187.79999999999998 257.8 H193.6 V252.0" fill="none" stroke="#444" stroke-width="1.3" /><path d="M533.3000000000001 258.4 V247.1 H544.6" fill="none" stroke="#444" stroke-width="1.2" /><path d="M537.0 250.8 L544.0 257.8 M538.2 257.8 H544.0 V252.0" fill="none" stroke="#444" stroke-width="1.3" /><path d="M1079.5 258.4 V247.1 H1090.8" fill="none" stroke="#444" stroke-width="1.2" /><path d="M1083.2 250.8 L1090.2 257.8 M1084.3999999999999 257.8 H1090.2 V252.0" fill="none" stroke="#444" stroke-width="1.3" /><path d="M1321.3 258.4 V247.1 H1332.6" fill="none" stroke="#444" stroke-width="1.2" /><path d="M1325.0 250.8 L1332.0 257.8 M1326.1999999999998 257.8 H1332.0 V252.0" fill="none" stroke="#444" stroke-width="1.3" /><path d="M379.6 150.6 L383.9 155.6 L388.2 150.6" fill="none" stroke="#2b2b2b" stroke-width="1.5" stroke-linecap='round' stroke-linejoin='round'/><path d="M447.8 150.6 L452.1 155.6 L456.4 150.6" fill="none" stroke="#2b2b2b" stroke-width="1.5" stroke-linecap='round' stroke-linejoin='round'/><path d="M472 160.6 L479 141.8 L486 160.6 M474.6 154 H483.4" fill="none" stroke="#333" stroke-width="1.5" /><path d="M487.6 146.8 L490.8 143.4 L494 146.8" fill="none" stroke="#1b82d1" stroke-width="1.5" /><path d="M513.4 160.6 L519 145.6 L524.6 160.6 M515.4 155 H522.6" fill="none" stroke="#333" stroke-width="1.5" /><path d="M526.6 143.4 L529.8 146.8 L533 143.4" fill="none" stroke="#1b82d1" stroke-width="1.5" /><path d="M222.4 192.4 H226 L232.6 202 V192.4 H236.2 V206.8 H232.6 L226 197.2 V206.8 H222.4 Z" fill="#333"/><path d="M267.8 192.6 H274.2 M263.8 206.8 H270.2 M271 192.6 L267 206.8" fill="none" stroke="#333" stroke-width="1.3" /><path d="M311 194.4 Q309.6 192.4 306.8 192.4 Q302.8 192.4 302.8 195.8 Q302.8 198.6 307 199.6 Q311.4 200.6 311.4 203.8 Q311.4 207 307 207 Q303.6 207 302.4 204.6" fill="none" stroke="#333" stroke-width="1.4" /><rect x="302" y="208" width="12" height="1.6" fill="#333"/><path d="M332.4 199.4 L336.29999999999995 203.6 L340.2 199.4" fill="none" stroke="#2b2b2b" stroke-width="1.6" stroke-linecap='round' stroke-linejoin='round'/><path d="M361.4 189.4 H383.4 V208 M361.4 189.4 V208 M361.4 198.8 H383.4 M372.4 189.4 V208" fill="none" stroke="#444" stroke-width="1.2" stroke-dasharray='1.4 1.6'/><rect x="360.8" y="209.6" width="23" height="1.8" fill="#333"/><path d="M397.2 199.4 L401.2 203.6 L405.2 199.4" fill="none" stroke="#2b2b2b" stroke-width="1.6" stroke-linecap='round' stroke-linejoin='round'/><path d="M430 199 L438.6 190.4 L446 197.8 L437.4 206.4 Z" fill="#fafafa" stroke="#333" stroke-width="1.4" stroke-linejoin="round"/><path d="M437 192 V189.2 Q437 188 438.2 188 Q439.4 188 439.4 189.2 V196" fill="none" stroke="#333" stroke-width="1.3" /><path d="M444.6 195.6 Q446.4 192 448.4 196 Q448.4 200 447.6 203 Q446.4 199.6 444.6 197.6 Z" fill="#1b6fc2"/><rect x="426" y="207.2" width="23.6" height="5.4" fill="#ebebeb"/><path d="M462.2 199.4 L466.2 203.6 L470.2 199.4" fill="none" stroke="#2b2b2b" stroke-width="1.6" stroke-linecap='round' stroke-linejoin='round'/><path d="M492.2 205.4 L499 189.4 L505.8 205.4 M494.6 200 H503.4" fill="none" stroke="#333" stroke-width="1.5" /><rect x="487" y="207.2" width="24" height="5.4" fill="#ff0000"/><path d="M522.8 199.4 L526.9 203.6 L531 199.4" fill="none" stroke="#2b2b2b" stroke-width="1.6" stroke-linecap='round' stroke-linejoin='round'/><rect x="602.6" y="135.4" width="34.8" height="34.8" rx="5" fill="#f0f0f0" stroke="#616161" stroke-width="1"/><rect x="602.6" y="183.4" width="34.8" height="35.2" rx="5" fill="#f0f0f0" stroke="#616161" stroke-width="1"/><path d="M570.4 141.6 H591.8" fill="none" stroke="#333" stroke-width="1.7" /><path d="M572.6 147.8 H589.6" fill="none" stroke="#333" stroke-width="1.7" /><path d="M570.4 154.2 H591.8" fill="none" stroke="#333" stroke-width="1.7" /><path d="M609.4 145.6 H630.6" fill="none" stroke="#333" stroke-width="1.7" /><path d="M611.6 151.8 H628.4" fill="none" stroke="#333" stroke-width="1.7" /><path d="M609.4 158 H630.6" fill="none" stroke="#333" stroke-width="1.7" /><path d="M648 151.6 H670" fill="none" stroke="#333" stroke-width="1.7" /><path d="M650.2 157.8 H667.8" fill="none" stroke="#333" stroke-width="1.7" /><path d="M648 164 H670" fill="none" stroke="#333" stroke-width="1.7" /><path d="M570.4 190.6 H591.8" fill="none" stroke="#333" stroke-width="1.7" /><path d="M570.4 196.8 H585.4" fill="none" stroke="#333" stroke-width="1.7" /><path d="M570.4 203 H591.8" fill="none" stroke="#333" stroke-width="1.7" /><path d="M570.4 209 H585.4" fill="none" stroke="#333" stroke-width="1.7" /><path d="M609.4 190.6 H630.6" fill="none" stroke="#333" stroke-width="1.7" /><path d="M612.6 196.8 H627.4" fill="none" stroke="#333" stroke-width="1.7" /><path d="M609.4 203 H630.6" fill="none" stroke="#333" stroke-width="1.7" /><path d="M612.6 209 H627.4" fill="none" stroke="#333" stroke-width="1.7" /><path d="M648 190.6 H670" fill="none" stroke="#333" stroke-width="1.7" /><path d="M655 196.8 H670" fill="none" stroke="#333" stroke-width="1.7" /><path d="M648 203 H670" fill="none" stroke="#333" stroke-width="1.7" /><path d="M655 209 H670" fill="none" stroke="#333" stroke-width="1.7" /><text x="0" y="0" font-family="Liberation Sans" font-size="18" fill="#333" transform="translate(694.8 160.6) rotate(-45)">ab</text><path d="M697.8 163.2 L713.6 147.6 M708 147.4 H713.8 V153" fill="none" stroke="#1b82d1" stroke-width="1.5" /><path d="M723.4 151.2 L727.2 155.4 L731 151.2" fill="none" stroke="#2b2b2b" stroke-width="1.7" stroke-linecap='round' stroke-linejoin='round'/><path d="M691.2 190.6 H713" fill="none" stroke="#333" stroke-width="1.7" /><path d="M700.6 196.8 H713" fill="none" stroke="#333" stroke-width="1.7" /><path d="M700.6 203 H713" fill="none" stroke="#333" stroke-width="1.7" /><path d="M691.2 209 H713" fill="none" stroke="#333" stroke-width="1.7" /><path d="M698 199.8 H691 M694.2 196.6 L691 199.8 L694.2 203" fill="none" stroke="#1b82d1" stroke-width="1.4" /><path d="M730.4 190.6 H751.6" fill="none" stroke="#333" stroke-width="1.7" /><path d="M739.8 196.8 H751.6" fill="none" stroke="#333" stroke-width="1.7" /><path d="M739.8 203 H751.6" fill="none" stroke="#333" stroke-width="1.7" /><path d="M730.4 209 H751.6" fill="none" stroke="#333" stroke-width="1.7" /><path d="M730.4 199.8 H737.4 M734.2 196.6 L737.4 199.8 L734.2 203" fill="none" stroke="#1b82d1" stroke-width="1.4" /><text x="787" y="152.6" font-family="Liberation Sans" font-size="15.5" fill="#333">ab</text><text x="787" y="163.6" font-family="Liberation Sans" font-size="15.5" fill="#333">c</text><path d="M806.2 153 Q808.4 160.2 797.6 160.2 M801.4 155.8 L797 160.2 L801.4 164.6" fill="none" stroke="#1b82d1" stroke-width="1.5" /><rect x="785" y="190" width="21.6" height="21.4" fill="none" stroke="#a6a6a6" stroke-width="1.3" /><path d="M785 195 H806.6 M785 206.4 H806.6 M790.4 200.7 H801.2 M792.6 198.4 L790.2 200.7 L792.6 203 M799 198.4 L801.4 200.7 L799 203" fill="none" stroke="#a6a6a6" stroke-width="1.2" /><path d="M1001.8 199.4 L1006.0999999999999 204 L1010.4 199.4" fill="none" stroke="#a6a6a6" stroke-width="1.4" stroke-linecap='round' stroke-linejoin='round'/><path d="M1314.2 150.4 L1318.1 155.4 L1322 150.4" fill="none" stroke="#2b2b2b" stroke-width="1.5" stroke-linecap='round' stroke-linejoin='round'/><rect x="1115.8" y="194" width="22.4" height="13.6" fill="none" stroke="#3b3b3b" stroke-width="1.5" /><path d="M1122.4 198.2 H1120 V203.4 H1122.4 M1126.8 198.2 H1124.6 V203.4 H1126.8" fill="none" stroke="#3b3b3b" stroke-width="1.2" /><rect x="1126.6" y="200.6" width="13" height="11.6" rx="5" fill="#fff"/><path d="M1127.8 202.6 Q1127.8 200.4 1133.2 200.4 Q1138.6 200.4 1138.6 202.6 V209.6 Q1138.6 211.8 1133.2 211.8 Q1127.8 211.8 1127.8 209.6 Z" fill="#fff" stroke="#e06d00" stroke-width="1.5"/><path d="M1127.8 204.6 Q1133.2 206.8 1138.6 204.6 M1127.8 207.6 Q1133.2 209.8 1138.6 207.6" fill="none" stroke="#e06d00" stroke-width="1.3" /><path d="M1151.4 200.2 L1155.4 204.4 L1159.4 200.2" fill="none" stroke="#2b2b2b" stroke-width="1.6" stroke-linecap='round' stroke-linejoin='round'/><circle cx="1180.9" cy="196.6" r="3.3" fill="none" stroke="#333" stroke-width="1.4" /><circle cx="1195.3" cy="205.6" r="3.4" fill="none" stroke="#333" stroke-width="1.4" /><path d="M1194.8 190.4 L1181.4 211.2" fill="none" stroke="#333" stroke-width="1.4" /><ellipse cx="1218.6" cy="200.3" rx="2.7" ry="4.9" fill="none" stroke="#555" stroke-width="1.2" /><ellipse cx="1226.1999999999998" cy="200.3" rx="2.7" ry="4.9" fill="none" stroke="#555" stroke-width="1.2" /><ellipse cx="1233.8" cy="200.3" rx="2.7" ry="4.9" fill="none" stroke="#555" stroke-width="1.2" /><text x="1270.4" y="198.8" font-family="Liberation Sans" font-size="13.6" fill="#333">,0</text><text x="1262.8" y="211.4" font-family="Liberation Sans" font-size="13.6" fill="#333">,00</text><path d="M1258.8 195.4 H1271.8 M1263 191.2 L1258.8 195.4 L1263 199.6" fill="none" stroke="#1b82d1" stroke-width="1.5" /><text x="1301.4" y="198.8" font-family="Liberation Sans" font-size="13.6" fill="#333">,00</text><text x="1309.2" y="211.4" font-family="Liberation Sans" font-size="13.6" fill="#333">,0</text><path d="M1297 206 H1310 M1305.8 201.8 L1310 206 L1305.8 210.2" fill="none" stroke="#1b82d1" stroke-width="1.5" /><rect x="1390" y="135" width="40.40000000000009" height="31.599999999999994" fill="#fafafa" stroke="#3b3b3b" stroke-width="1.5"/><path d="M1397 135 V166.6" fill="none" stroke="#3b3b3b" stroke-width="1.35" /><path d="M1422.2 135 V166.6" fill="none" stroke="#3b3b3b" stroke-width="1.35" /><path d="M1390 145.6 H1430.4" fill="none" stroke="#3b3b3b" stroke-width="1.35" /><path d="M1390 156.2 H1430.4" fill="none" stroke="#3b3b3b" stroke-width="1.35" /><rect x="1397.2" y="135.2" width="18.4" height="10.4" fill="#f8a1a9" stroke="#d8281d" stroke-width="1.4"/><rect x="1397.2" y="156.2" width="21.4" height="10.4" fill="#f8a1a9" stroke="#d8281d" stroke-width="1.4"/><rect x="1397.2" y="145.6" width="12.4" height="10.6" fill="#84bbe8" stroke="#1a6fc4" stroke-width="1.4"/><path d="M1454.6 211.6 L1458.5 215.6 L1462.4 211.6" fill="none" stroke="#2b2b2b" stroke-width="1.5" stroke-linecap='round' stroke-linejoin='round'/><rect x="1516.6" y="135" width="40.80000000000018" height="31.599999999999994" fill="#fafafa" stroke="#3b3b3b" stroke-width="1.5"/><path d="M1530.2 135 V166.6" fill="none" stroke="#3b3b3b" stroke-width="1.35" /><path d="M1544 135 V166.6" fill="none" stroke="#3b3b3b" stroke-width="1.35" /><path d="M1516.6 145.6 H1557.4" fill="none" stroke="#3b3b3b" stroke-width="1.35" /><path d="M1516.6 156.2 H1557.4" fill="none" stroke="#3b3b3b" stroke-width="1.35" /><path d="M1530.2 145.6 H1557.4 V166.6 H1530.2 Z" fill="#84bbe8" stroke="#1a6fc4" stroke-width="1.5"/><path d="M1544 145.6 V166.6 M1530.2 156.2 H1557.4" fill="none" stroke="#1a6fc4" stroke-width="1.3" /><path d="M1558.6 146.6 L1541.1999999999998 165.2" fill="none" stroke="#fff" stroke-width="7.4" stroke-linecap="round"/><path d="M1558.6 146.6 L1541.1999999999998 165.2" fill="none" stroke="#333" stroke-width="5" stroke-linecap="round"/><path d="M1558.6 146.6 L1541.1999999999998 165.2" fill="none" stroke="#fafafa" stroke-width="2.2" stroke-linecap="round"/><path d="M1538.8 163.6 Q1533.6 163.2 1532.6 169.2 Q1531.6 173.6 1527.6 173.6 Q1535.6 177.79999999999998 1541.0 173.2 Q1544.1999999999998 170.2 1543.1999999999998 167.2 Z" fill="#84bbe8" stroke="#1a6fc4" stroke-width="1.5" stroke-linejoin="round"/><path d="M1558.6 211.6 L1562.6999999999998 215.6 L1566.8 211.6" fill="none" stroke="#2b2b2b" stroke-width="1.5" stroke-linecap='round' stroke-linejoin='round'/><rect x="1626.8" y="135" width="40.40000000000009" height="31.599999999999994" fill="#fafafa" stroke="#3b3b3b" stroke-width="1.5"/><path d="M1634.4 135 V166.6" fill="none" stroke="#3b3b3b" stroke-width="1.35" /><path d="M1660.6 135 V166.6" fill="none" stroke="#3b3b3b" stroke-width="1.35" /><path d="M1626.8 142.6 H1667.2" fill="none" stroke="#3b3b3b" stroke-width="1.35" /><path d="M1626.8 159.4 H1667.2" fill="none" stroke="#3b3b3b" stroke-width="1.35" /><rect x="1634.4" y="142.6" width="25.6" height="16.8" fill="#84bbe8" stroke="#1a6fc4" stroke-width="1.5"/><path d="M1668.6 146.6 L1651.1999999999998 165.2" fill="none" stroke="#fff" stroke-width="7.4" stroke-linecap="round"/><path d="M1668.6 146.6 L1651.1999999999998 165.2" fill="none" stroke="#333" stroke-width="5" stroke-linecap="round"/><path d="M1668.6 146.6 L1651.1999999999998 165.2" fill="none" stroke="#fafafa" stroke-width="2.2" stroke-linecap="round"/><path d="M1648.8 163.6 Q1643.6 163.2 1642.6 169.2 Q1641.6 173.6 1637.6 173.6 Q1645.6 177.79999999999998 1651.0 173.2 Q1654.1999999999998 170.2 1653.1999999999998 167.2 Z" fill="#84bbe8" stroke="#1a6fc4" stroke-width="1.5" stroke-linejoin="round"/><path d="M1668 211.6 L1672.0 215.6 L1676 211.6" fill="none" stroke="#2b2b2b" stroke-width="1.5" stroke-linecap='round' stroke-linejoin='round'/><path d="M1720 131.2 H1742.4 V150.8 H1720 Z M1728.4 131.2 V150.8 M1735.6 131.2 V150.8" fill="none" stroke="#3b3b3b" stroke-width="1.4" /><rect x="1727.8" y="136.6" width="14.6" height="8.6" fill="#84bbe8" stroke="#1a6fc4" stroke-width="1.4"/><path d="M1734.6 136.6 V145.2" fill="none" stroke="#1a6fc4" stroke-width="1.2" /><rect x="1719" y="136" width="8" height="9.4" fill="#fafafa"/><path d="M1730 140.6 H1720.4 M1724 137 L1720.4 140.6 L1724 144.2" fill="none" stroke="#1b82d1" stroke-width="1.5" /><path d="M1824 139.6 L1828.3 143.8 L1832.6 139.6" fill="none" stroke="#2b2b2b" stroke-width="1.6" stroke-linecap='round' stroke-linejoin='round'/><path d="M1720 170.4 H1742.4 V189.8 H1720 Z M1728.4 170.4 V189.8 M1735.6 170.4 V189.8" fill="none" stroke="#3b3b3b" stroke-width="1.4" /><rect x="1718" y="175.6" width="26" height="9" fill="#fafafa"/><path d="M1720 175.6 V184.6 M1742.4 175.6 V184.6" fill="none" stroke="#3b3b3b" stroke-width="1.4" /><rect x="1724" y="175.8" width="8" height="8.2" fill="#84bbe8" stroke="#1a6fc4" stroke-width="1.4"/><path d="M1735 176.6 L1742 183.8 M1742 176.6 L1735 183.8" fill="none" stroke="#e8402f" stroke-width="1.5" /><path d="M1824.6 178.6 L1828.9 182.8 L1833.2 178.6" fill="none" stroke="#2b2b2b" stroke-width="1.6" stroke-linecap='round' stroke-linejoin='round'/><path d="M1720 211 H1742.4 V230.2 H1720 Z M1728.4 211 V230.2 M1735.6 211 V230.2" fill="none" stroke="#3b3b3b" stroke-width="1.4" /><path d="M1720 217 H1742.4 M1720 225 H1742.4" fill="none" stroke="#3b3b3b" stroke-width="1.2" /><rect x="1725.6" y="216.6" width="11.2" height="8" fill="#84bbe8" stroke="#1a6fc4" stroke-width="1.4"/><path d="M1724 208.6 H1738.6 M1724 206.8 V210.4 M1738.6 206.8 V210.4" fill="none" stroke="#1b82d1" stroke-width="1.3" /><path d="M1828 217.6 L1831.6 221.6 L1835.2 217.6" fill="none" stroke="#2b2b2b" stroke-width="1.6" stroke-linecap='round' stroke-linejoin='round'/><path d="M1903 134.2 V131.4 H1886 L1895.6 141 L1886 150.6 H1903 V147.8" fill="none" stroke="#333" stroke-width="1.7" stroke-linejoin='miter'/><path d="M1925 137.8 L1929.3 142 L1933.6 137.8" fill="none" stroke="#2b2b2b" stroke-width="1.6" stroke-linecap='round' stroke-linejoin='round'/><rect x="1882.8" y="170.4" width="22.6" height="19.2" fill="#fafafa" stroke="#333" stroke-width="1.5"/><path d="M1882.8 173 H1905.4" fill="none" stroke="#333" stroke-width="1.2" /><path d="M1893.4 175.6 V186.4 M1889 182.2 L1893.4 186.6 L1897.8 182.2" fill="none" stroke="#1b82d1" stroke-width="1.5" /><path d="M1915.4 178.4 L1919.5 182.4 L1923.6 178.4" fill="none" stroke="#2b2b2b" stroke-width="1.6" stroke-linecap='round' stroke-linejoin='round'/><path d="M1882.8 219 L1893.6 208.2 L1904.2 218.8 L1893.4 229.6 Z" fill="#fafafa" stroke="#9b35b5" stroke-width="1.5" stroke-linejoin="round"/><path d="M1882.8 219 L1887.8 214 L1898.4 224.6 L1893.4 229.6 Z" fill="#d9a0e3" stroke="#9b35b5" stroke-width="1.5" stroke-linejoin="round"/><path d="M1915.4 216.4 L1919.5 220.4 L1923.6 216.4" fill="none" stroke="#2b2b2b" stroke-width="1.6" stroke-linecap='round' stroke-linejoin='round'/><path d="M1971.4 149.4 L1978.7 131.6 L1985.8 149.4 M1974.2 142.7 H1983" fill="none" stroke="#2d8fdc" stroke-width="1.4" /><path d="M1971.9 153.4 H1983.6 L1971.8 169.7 H1984" fill="none" stroke="#333" stroke-width="1.4" /><path d="M1989.8 141.4 H2012.2 V145.2 L2003.2 153.6 V163.6 H1998.8 V153.6 L1989.8 145.2 Z" fill="#fafafa" stroke="#333" stroke-width="1.4" stroke-linejoin="round"/><path d="M2020 212.4 L2023.6 216.2 L2027.2 212.4" fill="none" stroke="#2b2b2b" stroke-width="1.5" stroke-linecap='round' stroke-linejoin='round'/><circle cx="2095.2" cy="145.7" r="14.7" fill="#fafafa" stroke="#333" stroke-width="1.4"/><path d="M2084.2 156.8 L2068 173" fill="none" stroke="#333" stroke-width="1.4" /><path d="M2128.4 212.4 L2132.3 216.2 L2136.2 212.4" fill="none" stroke="#2b2b2b" stroke-width="1.5" stroke-linecap='round' stroke-linejoin='round'/><rect x="2202.8" y="130.8" width="41" height="40.6" fill="none" stroke="#d9430e" stroke-width="1.8"/><rect x="2207" y="135" width="14.4" height="13.6" fill="none" stroke="#d9430e" stroke-width="1.8"/><rect x="2224.8" y="135" width="14.4" height="13.6" fill="none" stroke="#d9430e" stroke-width="1.8"/><rect x="2207" y="152.6" width="14.4" height="13.6" fill="none" stroke="#d9430e" stroke-width="1.8"/><rect x="2224.8" y="152.6" width="14.4" height="13.6" fill="none" stroke="#d9430e" stroke-width="1.8"/><defs><linearGradient id="cpA" x1="0" y1="0" x2="0" y2="1"><stop offset="0" stop-color="#18a0f2"/><stop offset="0.35" stop-color="#1f9ad8"/><stop offset="0.6" stop-color="#4fbf6a"/><stop offset="0.85" stop-color="#d8c420"/><stop offset="1" stop-color="#f0b818"/></linearGradient><linearGradient id="cpB" x1="0" y1="0" x2="0" y2="1"><stop offset="0" stop-color="#a850e4"/><stop offset="0.55" stop-color="#e8609a"/><stop offset="1" stop-color="#f4a050"/></linearGradient><linearGradient id="cpC" x1="0" y1="0" x2="1" y2="0"><stop offset="0" stop-color="#1670e0"/><stop offset="1" stop-color="#2038b0"/></linearGradient></defs><path d="M2325 130.8 H2340.8 L2333.4 160 H2318.4 Q2313.8 160 2314.8 155.6 L2320.6 134.6 Q2321.8 130.8 2325 130.8 Z" fill="url(#cpA)"/><path d="M2340.6 130.8 H2342.6 Q2346.2 130.8 2347.6 134.4 L2349.8 141.8 H2337.8 Z" fill="#1747c8"/><path d="M2344.4 141.8 H2354 Q2358.6 141.8 2357.6 146.2 L2351.6 167.2 Q2350.4 171 2347 171 H2331.8 L2339.8 145.6 Q2340.8 141.8 2344.4 141.8 Z" fill="url(#cpB)"/><path d="M2324.8 159.8 H2334.6 L2331.6 171 H2330 Q2326.6 171 2325.6 167.6 Z" fill="#f0663a"/><path d="M2437 167.6 H2426 A2.8 2.8 0 0 1 2423.2 164.8 V135.8 A2.8 2.8 0 0 1 2426 133 H2443 L2450.6 140.4 V152.2" fill="none" stroke="#2f6fe4" stroke-width="1.6" stroke-linejoin="round"/><path d="M2436.4 140.4 Q2434.6 140.6 2435.6 144 Q2437.4 149.6 2443.6 151.2 Q2446.6 152 2445.6 150.2 Q2443 148.6 2435.6 150.6 Q2429.6 152.6 2428.4 155.4 Q2428 157.6 2430.4 156.6 Q2433.4 154.6 2436.4 145.6 Q2437.6 141.2 2436.4 140.4 Z" fill="none" stroke="#2f6fe4" stroke-width="1.1" stroke-linejoin="round"/><path d="M2447.6 164 L2444 167.6 A3.4 3.4 0 0 0 2448.8 172.4 L2453.2 168 A3.4 3.4 0 0 0 2453.2 163.2" fill="none" stroke="#2f6fe4" stroke-width="1.7" stroke-linecap='round'/><path d="M2451.4 163.4 A3.4 3.4 0 0 1 2451.4 158.6 L2455.8 154.2 A3.4 3.4 0 0 1 2460.6 159 L2457.4 162.2" fill="none" stroke="#2f6fe4" stroke-width="1.7" stroke-linecap='round'/><path d="M2519.4 242.8 L2526.4 250 L2533.4 242.8" fill="none" stroke="#2b2b2b" stroke-width="1.5" stroke-linecap='round' stroke-linejoin='round'/><path d="M140.8 294.4 L147.7 301.6 L154.6 294.4" fill="none" stroke="#2b2b2b" stroke-width="1.5" stroke-linecap='round' stroke-linejoin='round'/><rect x="177.6" y="289.6" width="3" height="3" fill="#333"/><rect x="177.6" y="295.6" width="3" height="3" fill="#333"/><rect x="177.6" y="301.6" width="3" height="3" fill="#333"/><path d="M204.4 288.4 L221.6 305.4 M221.6 288.4 L204.4 305.4" fill="none" stroke="#8a8a8a" stroke-width="1.3" /><path d="M237.4 297.6 L243.6 303.8 L260.6 289" fill="none" stroke="#8a8a8a" stroke-width="1.3" /><text x="274.6" y="303.4" font-family="Liberation Serif" font-style="italic" font-weight="700" font-size="25" fill="#2b2b2b" textLength="21" lengthAdjust="spacingAndGlyphs">fx</text><path d="M304 294.6 L310.9 300.8 L317.8 294.6" fill="none" stroke="#8a8a8a" stroke-width="1.3" stroke-linecap='round' stroke-linejoin='round'/><path d="M2526.6 291.4 L2533.7 298.4 L2540.8 291.4" fill="none" stroke="#2b2b2b" stroke-width="1.5" stroke-linecap='round' stroke-linejoin='round'/><rect x="92.6" y="1503.6" width="20" height="17" fill="none" stroke="#333" stroke-width="1.3" /><path d="M92.6 1507.6 H112.6 M95.6 1511 H100 M95.6 1514.4 H99 M95.6 1517.6 H99" fill="none" stroke="#333" stroke-width="1.1" /><circle cx="106.2" cy="1515.4" r="5" fill="#fff" stroke="#333" stroke-width="1.3"/><circle cx="106.2" cy="1515.4" r="2.2" fill="#333"/><circle cx="148.6" cy="1504.8" r="2.6" fill="none" stroke="#333" stroke-width="1.4" /><path d="M140 1507.6 Q139.6 1510.4 143 1510.4 Q147 1510.6 148.6 1509.6 Q150.4 1510.6 154.2 1510.4 Q157.6 1510.4 157.2 1507.6" fill="none" stroke="#333" stroke-width="1.4" stroke-linecap='round'/><path d="M147.8 1510.4 Q147 1514 145.2 1515.6 Q143.6 1517.6 145 1519.6 Q145.6 1521.4 144 1521.6 M151.6 1510.6 V1514.6" fill="none" stroke="#333" stroke-width="1.4" stroke-linecap='round'/><path d="M149.8 1517.4 L153.8 1521.6 L161.2 1514" fill="none" stroke="#333" stroke-width="1.5" /><path d="M1928 1519.8 H1918.8 V1503.4 H1939.4 V1510" fill="none" stroke="#333" stroke-width="1.3" /><polygon points="1938.80,1515.60 1936.67,1517.28 1936.98,1519.98 1934.28,1519.67 1932.60,1521.80 1930.92,1519.67 1928.22,1519.98 1928.53,1517.28 1926.40,1515.60 1928.53,1513.92 1928.22,1511.22 1930.92,1511.53 1932.60,1509.40 1934.28,1511.53 1936.98,1511.22 1936.67,1513.92" fill="#f3f3f3" stroke="#333" stroke-width="1.2" stroke-linejoin="round"/><circle cx="1932.6" cy="1515.6" r="1.8" fill="#333"/><rect x="2134" y="1503" width="18.4" height="17.6" fill="none" stroke="#333" stroke-width="1.4" /><path d="M2140.1 1503 V1520.6 M2146.3 1503 V1520.6 M2134 1508.9 H2152.4 M2134 1514.8 H2152.4" fill="none" stroke="#333" stroke-width="1.3" /><rect x="2194" y="1503" width="20.4" height="17.6" fill="none" stroke="#333" stroke-width="1.4" /><rect x="2198" y="1506.6" width="12.4" height="10.6" fill="none" stroke="#333" stroke-width="1.2" /><path d="M2200.4 1509.6 H2208 M2200.4 1512 H2208 M2200.4 1514.4 H2208" fill="none" stroke="#333" stroke-width="1" /><rect x="2254" y="1503" width="19.6" height="17.6" fill="none" stroke="#333" stroke-width="1.4" /><path d="M2254 1511.2 H2265.8 V1503 M2260 1503 V1511.2" fill="none" stroke="#333" stroke-width="1.3" /></svg>
<div class="t" style="left:43.00px;top:338.90px;font-size:19.5px;font-weight:400;color:#3a3a3a;">A</div><div class="t" style="left:224.00px;top:338.90px;font-size:19.5px;font-weight:400;color:#3a3a3a;">B</div><div class="t" style="left:404.50px;top:338.90px;font-size:19.5px;font-weight:400;color:#3a3a3a;">C</div><div class="t" style="left:489.50px;top:338.90px;font-size:19.5px;font-weight:400;color:#3a3a3a;">D</div><div class="t" style="left:633.50px;top:338.90px;font-size:19.5px;font-weight:400;color:#3a3a3a;">E</div><div class="t" style="left:712.50px;top:338.90px;font-size:19.5px;font-weight:400;color:#3a3a3a;">F</div><div class="t" style="left:809.00px;top:338.90px;font-size:19.5px;font-weight:400;color:#3a3a3a;">G</div><div class="t" style="left:907.50px;top:338.90px;font-size:19.5px;font-weight:400;color:#3a3a3a;">H</div><div class="t" style="left:1033.00px;top:338.90px;font-size:19.5px;font-weight:400;color:#3a3a3a;">I</div><div class="t" style="left:1153.50px;top:338.90px;font-size:19.5px;font-weight:400;color:#3a3a3a;">J</div><div class="t" style="left:1298.50px;top:338.90px;font-size:19.5px;font-weight:400;color:#3a3a3a;">K</div><div class="t" style="left:1447.00px;top:338.90px;font-size:19.5px;font-weight:400;color:#3a3a3a;">L</div><div class="t" style="left:1576.00px;top:338.90px;font-size:19.5px;font-weight:400;color:#3a3a3a;">M</div><div class="t" style="left:1708.50px;top:338.90px;font-size:19.5px;font-weight:400;color:#3a3a3a;">N</div><div class="t" style="left:1820.50px;top:338.90px;font-size:19.5px;font-weight:400;color:#107c41;">O</div><div class="t" style="left:1972.00px;top:338.90px;font-size:19.5px;font-weight:400;color:#3a3a3a;">P</div><div class="t" style="left:2067.00px;top:338.90px;font-size:19.5px;font-weight:400;color:#3a3a3a;">Q</div><div class="t" style="left:2163.50px;top:338.90px;font-size:19.5px;font-weight:400;color:#3a3a3a;">R</div><div class="t" style="left:2260.00px;top:338.90px;font-size:19.5px;font-weight:400;color:#3a3a3a;">S</div><div class="t" style="left:2356.50px;top:338.90px;font-size:19.5px;font-weight:400;color:#3a3a3a;">T</div><div class="t" style="left:2451.50px;top:338.90px;font-size:19.5px;font-weight:400;color:#3a3a3a;">U</div><div class="t" style="left:14.30px;top:366.70px;font-size:19.5px;font-weight:400;color:#3a3a3a;">1</div><div class="t" style="left:14.30px;top:416.70px;font-size:19.5px;font-weight:400;color:#3a3a3a;">2</div><div class="t" style="left:14.30px;top:466.70px;font-size:19.5px;font-weight:400;color:#3a3a3a;">3</div><div class="t" style="left:14.80px;top:494.70px;font-size:19.5px;font-weight:400;color:#107c41;">4</div><div class="t" style="left:14.30px;top:522.70px;font-size:19.5px;font-weight:400;color:#3a3a3a;">5</div><div class="t" style="left:14.30px;top:550.70px;font-size:19.5px;font-weight:400;color:#3a3a3a;">6</div><div class="t" style="left:14.30px;top:578.70px;font-size:19.5px;font-weight:400;color:#3a3a3a;">7</div><div class="t" style="left:14.30px;top:606.70px;font-size:19.5px;font-weight:400;color:#3a3a3a;">8</div><div class="t" style="left:14.30px;top:634.70px;font-size:19.5px;font-weight:400;color:#3a3a3a;">9</div><div class="t" style="left:8.80px;top:662.70px;font-size:19.5px;font-weight:400;color:#3a3a3a;">10</div><div class="t" style="left:9.80px;top:690.70px;font-size:19.5px;font-weight:400;color:#3a3a3a;">11</div><div class="t" style="left:8.80px;top:718.70px;font-size:19.5px;font-weight:400;color:#3a3a3a;">12</div><div class="t" style="left:8.80px;top:746.70px;font-size:19.5px;font-weight:400;color:#3a3a3a;">13</div><div class="t" style="left:8.80px;top:774.70px;font-size:19.5px;font-weight:400;color:#3a3a3a;">14</div><div class="t" style="left:8.80px;top:802.70px;font-size:19.5px;font-weight:400;color:#3a3a3a;">15</div><div class="t" style="left:8.80px;top:830.70px;font-size:19.5px;font-weight:400;color:#3a3a3a;">16</div><div class="t" style="left:8.80px;top:858.70px;font-size:19.5px;font-weight:400;color:#3a3a3a;">17</div><div class="t" style="left:8.80px;top:886.70px;font-size:19.5px;font-weight:400;color:#3a3a3a;">18</div><div class="t" style="left:8.80px;top:914.70px;font-size:19.5px;font-weight:400;color:#3a3a3a;">19</div><div class="t" style="left:8.80px;top:942.70px;font-size:19.5px;font-weight:400;color:#3a3a3a;">20</div><div class="t" style="left:8.80px;top:970.70px;font-size:19.5px;font-weight:400;color:#3a3a3a;">21</div><div class="t" style="left:8.80px;top:998.70px;font-size:19.5px;font-weight:400;color:#3a3a3a;">22</div><div class="t" style="left:8.80px;top:1026.70px;font-size:19.5px;font-weight:400;color:#3a3a3a;">23</div><div class="t" style="left:8.80px;top:1054.70px;font-size:19.5px;font-weight:400;color:#3a3a3a;">24</div><div class="t" style="left:8.80px;top:1082.70px;font-size:19.5px;font-weight:400;color:#3a3a3a;">25</div><div class="t" style="left:8.80px;top:1110.70px;font-size:19.5px;font-weight:400;color:#3a3a3a;">26</div><div class="t" style="left:8.80px;top:1138.70px;font-size:19.5px;font-weight:400;color:#3a3a3a;">27</div><div class="t" style="left:8.80px;top:1166.70px;font-size:19.5px;font-weight:400;color:#3a3a3a;">28</div><div class="t" style="left:8.80px;top:1194.70px;font-size:19.5px;font-weight:400;color:#3a3a3a;">29</div><div class="t" style="left:8.80px;top:1222.70px;font-size:19.5px;font-weight:400;color:#3a3a3a;">30</div><div class="t" style="left:8.80px;top:1250.70px;font-size:19.5px;font-weight:400;color:#3a3a3a;">31</div><div class="t" style="left:8.80px;top:1278.70px;font-size:19.5px;font-weight:400;color:#3a3a3a;">32</div><div class="t" style="left:8.80px;top:1306.70px;font-size:19.5px;font-weight:400;color:#3a3a3a;">33</div><div class="t" style="left:8.80px;top:1334.70px;font-size:19.5px;font-weight:400;color:#3a3a3a;">34</div><div class="t" style="left:8.80px;top:1362.70px;font-size:19.5px;font-weight:400;color:#3a3a3a;">35</div><div class="t" style="left:8.80px;top:1390.70px;font-size:19.5px;font-weight:400;color:#3a3a3a;">36</div><div class="t" style="left:8.80px;top:1418.70px;font-size:19.5px;font-weight:400;color:#3a3a3a;">37</div><div class="t" style="left:138.50px;top:455.80px;font-size:20px;font-weight:700;color:#fff;">NOME MOTORISTA</div><div class="t" style="left:168.50px;top:494.50px;font-size:20px;font-weight:400;color:#000;">ANA CECILIA</div><div class="t" style="left:186.00px;top:522.50px;font-size:20px;font-weight:400;color:#000;">RONIELE</div><div class="t" style="left:189.50px;top:550.50px;font-size:20px;font-weight:400;color:#000;">CARLOS</div><div class="t" style="left:185.50px;top:578.50px;font-size:20px;font-weight:400;color:#000;">ANTONIO</div><div class="t" style="left:171.00px;top:606.50px;font-size:20px;font-weight:400;color:#000;">FRANCISCO</div><div class="t" style="left:204.50px;top:634.50px;font-size:20px;font-weight:400;color:#000;">JOSE</div><div class="t" style="left:211.50px;top:662.50px;font-size:20px;font-weight:400;color:#000;">E.B.</div><div class="t" style="left:191.50px;top:690.50px;font-size:20px;font-weight:400;color:#000;">MOIZES</div><div class="t" style="left:187.50px;top:718.50px;font-size:20px;font-weight:400;color:#000;">MANOEL</div><div class="t" style="left:174.00px;top:746.50px;font-size:20px;font-weight:400;color:#000;">SEBASTIAO</div><div class="t" style="left:181.00px;top:775.80px;font-size:22px;font-weight:400;color:#000;">LUCIANO</div><div class="t" style="left:183.00px;top:803.80px;font-size:22px;font-weight:400;color:#000;">RODNEY</div><div class="t" style="left:179.00px;top:831.80px;font-size:22px;font-weight:400;color:#000;">NETHIANI</div><div class="t" style="left:185.50px;top:859.80px;font-size:22px;font-weight:400;color:#000;">ARTHUR</div><div class="t" style="left:175.50px;top:887.80px;font-size:22px;font-weight:400;color:#000;">MARCELO</div><div class="t" style="left:462.00px;top:455.80px;font-size:20px;font-weight:700;color:#fff;">PLACA</div><div class="t" style="left:617.00px;top:455.80px;font-size:20px;font-weight:700;color:#fff;">TIPO</div><div class="t" style="left:449.50px;top:494.50px;font-size:20px;font-weight:400;color:#000;">PLACA 01</div><div class="t" style="left:614.00px;top:494.50px;font-size:20px;font-weight:400;color:#000;">LEVE</div><div class="t" style="left:449.50px;top:522.50px;font-size:20px;font-weight:400;color:#000;">PLACA 02</div><div class="t" style="left:614.00px;top:522.50px;font-size:20px;font-weight:400;color:#000;">LEVE</div><div class="t" style="left:449.00px;top:550.50px;font-size:20px;font-weight:400;color:#000;">PLACA 03</div><div class="t" style="left:598.00px;top:550.50px;font-size:20px;font-weight:400;color:#000;">PESADO</div><div class="t" style="left:449.00px;top:578.50px;font-size:20px;font-weight:400;color:#000;">PLACA 04</div><div class="t" style="left:614.00px;top:578.50px;font-size:20px;font-weight:400;color:#000;">LEVE</div><div class="t" style="left:449.00px;top:606.50px;font-size:20px;font-weight:400;color:#000;">PLACA 05</div><div class="t" style="left:598.00px;top:606.50px;font-size:20px;font-weight:400;color:#000;">PESADO</div><div class="t" style="left:449.00px;top:634.50px;font-size:20px;font-weight:400;color:#000;">PLACA 06</div><div class="t" style="left:598.00px;top:634.50px;font-size:20px;font-weight:400;color:#000;">PESADO</div><div class="t" style="left:449.50px;top:662.50px;font-size:20px;font-weight:400;color:#000;">PLACA 07</div><div class="t" style="left:598.00px;top:662.50px;font-size:20px;font-weight:400;color:#000;">PESADO</div><div class="t" style="left:449.00px;top:690.50px;font-size:20px;font-weight:400;color:#000;">PLACA 08</div><div class="t" style="left:614.00px;top:690.50px;font-size:20px;font-weight:400;color:#000;">LEVE</div><div class="t" style="left:449.50px;top:718.50px;font-size:20px;font-weight:400;color:#000;">PLACA 09</div><div class="t" style="left:598.00px;top:718.50px;font-size:20px;font-weight:400;color:#000;">PESADO</div><div class="t" style="left:449.00px;top:746.50px;font-size:20px;font-weight:400;color:#000;">PLACA 10</div><div class="t" style="left:598.00px;top:746.50px;font-size:20px;font-weight:400;color:#000;">PESADO</div><div class="t" style="left:445.50px;top:775.80px;font-size:22px;font-weight:400;color:#000;">PLACA 11</div><div class="t" style="left:593.50px;top:775.80px;font-size:22px;font-weight:400;color:#000;">PESADO</div><div class="t" style="left:444.50px;top:803.80px;font-size:22px;font-weight:400;color:#000;">PLACA 12</div><div class="t" style="left:593.50px;top:803.80px;font-size:22px;font-weight:400;color:#000;">PESADO</div><div class="t" style="left:444.50px;top:831.80px;font-size:22px;font-weight:400;color:#000;">PLACA 13</div><div class="t" style="left:593.50px;top:831.80px;font-size:22px;font-weight:400;color:#000;">PESADO</div><div class="t" style="left:733.50px;top:455.80px;font-size:20px;font-weight:700;color:#fff;">DEPARTAMENTO</div><div class="t" style="left:757.00px;top:494.50px;font-size:20px;font-weight:400;color:#000;">COMERCIAL</div><div class="t" style="left:762.50px;top:522.50px;font-size:20px;font-weight:400;color:#000;">LOGISTICA</div><div class="t" style="left:948.50px;top:455.80px;font-size:20px;font-weight:700;color:#fff;">TIPO DE SERVIÇO</div><div class="t" style="left:970.00px;top:494.50px;font-size:20px;font-weight:400;color:#000;">Abastecimento</div><div class="t" style="left:950.50px;top:522.50px;font-size:20px;font-weight:400;color:#000;">Lavagem expressa</div><div class="t" style="left:944.00px;top:550.50px;font-size:20px;font-weight:400;color:#000;">Filtro de combustivel</div><div class="t" style="left:977.50px;top:578.50px;font-size:20px;font-weight:400;color:#000;">Filtro de oleo</div><div class="t" style="left:1015.00px;top:606.50px;font-size:20px;font-weight:400;color:#000;">Oleo</div><div class="t" style="left:1189.50px;top:455.80px;font-size:20px;font-weight:700;color:#fff;">TIPO DE COMBUSTÍVEL</div><div class="t" style="left:1212.50px;top:494.50px;font-size:20px;font-weight:400;color:#000;">GASOLINA COMUM</div><div class="t" style="left:1265.00px;top:522.50px;font-size:20px;font-weight:400;color:#000;">ETANOL</div><div class="t" style="left:1203.50px;top:550.50px;font-size:20px;font-weight:400;color:#000;">DIESEL S-10 COMUM</div><div class="t" style="left:1274.00px;top:578.50px;font-size:20px;font-weight:400;color:#000;">Arla 32</div><div class="t" style="left:1189.00px;top:606.50px;font-size:20px;font-weight:400;color:#000;">DIESEL S-10 ADITIVADO</div><div class="t" style="left:1188.00px;top:635.80px;font-size:22px;font-weight:400;color:#000;">GASOLINA ADITIVADA</div><div class="t" style="left:1277.00px;top:663.80px;font-size:22px;font-weight:400;color:#000;">FLEX</div><div class="t" style="left:1265.00px;top:691.80px;font-size:22px;font-weight:400;color:#000;">DIESEL</div><div class="t" style="left:1251.00px;top:719.80px;font-size:22px;font-weight:400;color:#000;">Diesel S10</div><div class="t" style="left:1264.50px;top:747.80px;font-size:22px;font-weight:400;color:#000;">ARLA32</div><div class="t" style="left:1261.00px;top:775.80px;font-size:22px;font-weight:400;color:#000;">Gasolina</div><div class="t" style="left:1487.00px;top:455.80px;font-size:20px;font-weight:700;color:#fff;">TANQUE DE DIESEL</div><div class="t" style="left:1553.50px;top:494.50px;font-size:20px;font-weight:400;color:#000;">15.000</div><div class="t" style="left:1739.50px;top:455.80px;font-size:20px;font-weight:700;color:#fff;">TANQUE DE ARLA</div><div class="t" style="left:1803.00px;top:494.50px;font-size:20px;font-weight:400;color:#000;">1.000</div><div class="t g" style="left:55.25px;top:395.40px;font-size:51px;font-weight:700;color:#000;transform:scaleX(0.8746);transform-origin:0 0;-webkit-text-stroke:0.8px #000;text-shadow:2px 2px 2px rgba(0,0,0,0.3);">CADASTROS</div><div class="t g" style="left:177.35px;top:1468.00px;font-size:21px;font-weight:700;color:#242424;transform:scaleX(0.9475);transform-origin:0 0;">Cadastros</div><div class="t g" style="left:320.79px;top:1472.70px;font-size:20.6px;font-weight:400;color:#242424;transform:scaleX(0.9117);transform-origin:0 0;">CONTROLE DE FROTA EXTERNO</div><div class="t g" style="left:676.60px;top:1472.70px;font-size:20.6px;font-weight:400;color:#242424;transform:scaleX(0.9257);transform-origin:0 0;">ABASTECIMENTO INTERNO - GERAL</div><div class="t g" style="left:1067.37px;top:1472.70px;font-size:20.6px;font-weight:400;color:#242424;transform:scaleX(0.9319);transform-origin:0 0;">COMPRA INTERNO - DIESEL</div><div class="t g" style="left:1385.75px;top:1472.70px;font-size:20.6px;font-weight:400;color:#242424;transform:scaleX(0.9473);transform-origin:0 0;">COMPRA INTERNO - ARLA</div><div class="t g" style="left:15.77px;top:1512.30px;font-size:17.4px;font-weight:400;color:#262626;transform:scaleX(0.9347);transform-origin:0 0;">Pronto</div><div class="t g" style="left:166.70px;top:1512.30px;font-size:17.4px;font-weight:400;color:#262626;transform:scaleX(0.8873);transform-origin:0 0;">Acessibilidade: tudo certo</div><div class="t g" style="left:1943.31px;top:1511.70px;font-size:17.4px;font-weight:400;color:#262626;transform:scaleX(0.8887);transform-origin:0 0;">Exibir Configurações</div><div class="t g" style="left:2507.89px;top:1511.70px;font-size:17.4px;font-weight:400;color:#262626;transform:scaleX(0.9093);transform-origin:0 0;">100%</div><div class="t g" style="left:70.71px;top:36.90px;font-size:16px;font-weight:400;color:#242424;transform:scaleX(0.9892);transform-origin:0 0;">Salvamento Automático</div><div class="t g" style="left:541.57px;top:37.00px;font-size:19px;font-weight:400;color:#242424;transform:scaleX(0.9272);transform-origin:0 0;">Combustível de Frota 1.1.xlsx • Salvo neste PC</div><div class="t g" style="left:1077.46px;top:37.00px;font-size:19.5px;font-weight:400;color:#5c5c5c;transform:scaleX(0.9419);transform-origin:0 0;">Pesquisar</div><div class="t g" style="left:11.60px;top:96.00px;font-size:20.5px;font-weight:400;color:#242424;transform:scaleX(0.9884);transform-origin:0 0;">Arquivo</div><div class="t g" style="left:99.04px;top:96.00px;font-size:20.5px;font-weight:400;color:#242424;transform:scaleX(0.9790);transform-origin:0 0;-webkit-text-stroke:0.5px #242424;">Página Inicial</div><div class="t g" style="left:246.40px;top:96.00px;font-size:20.5px;font-weight:400;color:#242424;transform:scaleX(0.9509);transform-origin:0 0;">Inserir</div><div class="t g" style="left:333.18px;top:96.00px;font-size:20.5px;font-weight:400;color:#242424;transform:scaleX(0.9080);transform-origin:0 0;">Desenhar</div><div class="t g" style="left:446.83px;top:96.00px;font-size:20.5px;font-weight:400;color:#242424;transform:scaleX(0.9361);transform-origin:0 0;">Layout da Página</div><div class="t g" style="left:628.07px;top:96.00px;font-size:20.5px;font-weight:400;color:#242424;transform:scaleX(0.9627);transform-origin:0 0;">Fórmulas</div><div class="t g" style="left:738.78px;top:96.00px;font-size:20.5px;font-weight:400;color:#242424;transform:scaleX(0.9614);transform-origin:0 0;">Dados</div><div class="t g" style="left:823.79px;top:96.00px;font-size:20.5px;font-weight:400;color:#242424;transform:scaleX(0.9070);transform-origin:0 0;">Revisão</div><div class="t g" style="left:918.05px;top:96.00px;font-size:20.5px;font-weight:400;color:#242424;transform:scaleX(0.9735);transform-origin:0 0;">Exibir</div><div class="t g" style="left:998.60px;top:96.00px;font-size:20.5px;font-weight:400;color:#242424;transform:scaleX(0.9798);transform-origin:0 0;">Automatizar</div><div class="t g" style="left:1136.37px;top:96.00px;font-size:20.5px;font-weight:400;color:#242424;transform:scaleX(0.9630);transform-origin:0 0;">Desenvolvedor</div><div class="t g" style="left:1300.00px;top:96.00px;font-size:20.5px;font-weight:400;color:#242424;transform:scaleX(0.9731);transform-origin:0 0;">Ajuda</div><div class="t g" style="left:1379.50px;top:96.00px;font-size:20.5px;font-weight:400;color:#242424;transform:scaleX(0.9648);transform-origin:0 0;">Acrobat</div><div class="t g" style="left:1478.40px;top:96.00px;font-size:20.5px;font-weight:400;color:#242424;transform:scaleX(0.9523);transform-origin:0 0;">Power Pivot</div><div class="t g" style="left:1615.63px;top:96.00px;font-size:20.5px;font-weight:400;color:#1d7a45;transform:scaleX(0.9353);transform-origin:0 0;">Design da Tabela</div><div class="t g" style="left:2187.63px;top:94.80px;font-size:20.4px;font-weight:400;color:#242424;transform:scaleX(0.9667);transform-origin:0 0;">Comentários</div><div class="t g" style="left:2351.51px;top:94.80px;font-size:20.4px;font-weight:400;color:#fff;transform:scaleX(0.9927);transform-origin:0 0;">Compartilhamento</div><div class="t g" style="left:50.33px;top:193.00px;font-size:18px;font-weight:400;color:#242424;transform:scaleX(0.9667);transform-origin:0 0;">Colar</div><div class="t g" style="left:21.40px;top:251.80px;font-size:17px;font-weight:400;color:#242424;transform:scaleX(0.8856);transform-origin:0 0;">Área de Transferência</div><div class="t g" style="left:342.48px;top:251.80px;font-size:17px;font-weight:400;color:#242424;transform:scaleX(0.9214);transform-origin:0 0;">Fonte</div><div class="t g" style="left:766.30px;top:251.80px;font-size:17px;font-weight:400;color:#242424;transform:scaleX(0.9415);transform-origin:0 0;">Alinhamento</div><div class="t g" style="left:1175.42px;top:252.00px;font-size:17px;font-weight:400;color:#242424;transform:scaleX(0.9763);transform-origin:0 0;">Número</div><div class="t g" style="left:1496.82px;top:252.60px;font-size:17px;font-weight:400;color:#242424;transform:scaleX(0.8812);transform-origin:0 0;">Estilos</div><div class="t g" style="left:1755.52px;top:252.80px;font-size:17px;font-weight:400;color:#242424;transform:scaleX(0.8836);transform-origin:0 0;">Células</div><div class="t g" style="left:1985.72px;top:252.80px;font-size:17px;font-weight:400;color:#242424;transform:scaleX(0.8840);transform-origin:0 0;">Edição</div><div class="t g" style="left:2175.38px;top:252.80px;font-size:17px;font-weight:400;color:#242424;transform:scaleX(0.9184);transform-origin:0 0;">Suplementos</div><div class="t g" style="left:2384.50px;top:252.80px;font-size:17px;font-weight:400;color:#242424;transform:scaleX(0.9152);transform-origin:0 0;">Adobe Acrobat</div><div class="t g" style="left:813.36px;top:154.00px;font-size:19px;font-weight:400;color:#242424;transform:scaleX(0.9438);transform-origin:0 0;">Quebrar Texto Automaticamente</div><div class="t g" style="left:813.80px;top:202.40px;font-size:19px;font-weight:400;color:#a6a6a6;transform:scaleX(0.8983);transform-origin:0 0;">Mesclar e Centralizar</div><div class="t g" style="left:1362.31px;top:190.90px;font-size:18px;font-weight:400;color:#242424;transform:scaleX(0.9883);transform-origin:0 0;">Formatação</div><div class="t g" style="left:1354.40px;top:215.00px;font-size:18px;font-weight:400;color:#242424;transform:scaleX(1.0043);transform-origin:0 0;">Condicional</div><div class="t g" style="left:1475.69px;top:190.90px;font-size:18px;font-weight:400;color:#242424;transform:scaleX(1.0092);transform-origin:0 0;">Formatar como</div><div class="t g" style="left:1504.50px;top:215.00px;font-size:18px;font-weight:400;color:#242424;transform:scaleX(0.8962);transform-origin:0 0;">Tabela</div><div class="t g" style="left:1610.03px;top:190.90px;font-size:18px;font-weight:400;color:#242424;transform:scaleX(0.9697);transform-origin:0 0;">Estilos de</div><div class="t g" style="left:1614.58px;top:215.00px;font-size:18px;font-weight:400;color:#242424;transform:scaleX(0.9160);transform-origin:0 0;">Célula</div><div class="t g" style="left:1748.06px;top:141.80px;font-size:18px;font-weight:400;color:#242424;transform:scaleX(0.9708);transform-origin:0 0;">Inserir</div><div class="t g" style="left:1749.10px;top:181.00px;font-size:18px;font-weight:400;color:#242424;transform:scaleX(0.8981);transform-origin:0 0;">Excluir</div><div class="t g" style="left:1749.02px;top:220.20px;font-size:18px;font-weight:400;color:#242424;transform:scaleX(0.9819);transform-origin:0 0;">Formatar</div><div class="t g" style="left:1953.47px;top:190.90px;font-size:18px;font-weight:400;color:#242424;transform:scaleX(0.9317);transform-origin:0 0;">Classificar</div><div class="t g" style="left:1954.45px;top:214.60px;font-size:18px;font-weight:400;color:#242424;transform:scaleX(0.9550);transform-origin:0 0;">e Filtrar</div><div class="t g" style="left:2050.06px;top:190.90px;font-size:18px;font-weight:400;color:#242424;transform:scaleX(0.9447);transform-origin:0 0;">Localizar e</div><div class="t g" style="left:2041.56px;top:214.60px;font-size:18px;font-weight:400;color:#242424;transform:scaleX(0.9381);transform-origin:0 0;">Selecionar</div><div class="t g" style="left:2170.20px;top:191.00px;font-size:18px;font-weight:400;color:#242424;">Suplementos</div><div class="t g" style="left:2306.15px;top:191.00px;font-size:18px;font-weight:400;color:#242424;transform:scaleX(1.0509);transform-origin:0 0;">Copilot</div><div class="t g" style="left:2405.33px;top:191.00px;font-size:18px;font-weight:400;color:#242424;transform:scaleX(0.9721);transform-origin:0 0;">Crie um</div><div class="t g" style="left:2419.49px;top:214.60px;font-size:18px;font-weight:400;color:#242424;transform:scaleX(0.9088);transform-origin:0 0;">PDF</div><div class="t g" style="left:214.57px;top:154.00px;font-size:18.6px;font-weight:400;color:#242424;transform:scaleX(0.9280);transform-origin:0 0;">OP</div><div class="t g" style="left:399.45px;top:154.00px;font-size:18.6px;font-weight:400;color:#242424;transform:scaleX(0.9474);transform-origin:0 0;">10</div><div class="t g" style="left:1112.02px;top:154.20px;font-size:18.6px;font-weight:400;color:#242424;transform:scaleX(0.9781);transform-origin:0 0;">Número</div><div class="t g" style="left:17.69px;top:296.80px;font-size:19.8px;font-weight:400;color:#242424;transform:scaleX(1.0058);transform-origin:0 0;">DtanqueA</div><div class="t g" style="left:344.41px;top:296.80px;font-size:19.8px;font-weight:400;color:#242424;transform:scaleX(0.9905);transform-origin:0 0;">1000</div>

</body></html>
